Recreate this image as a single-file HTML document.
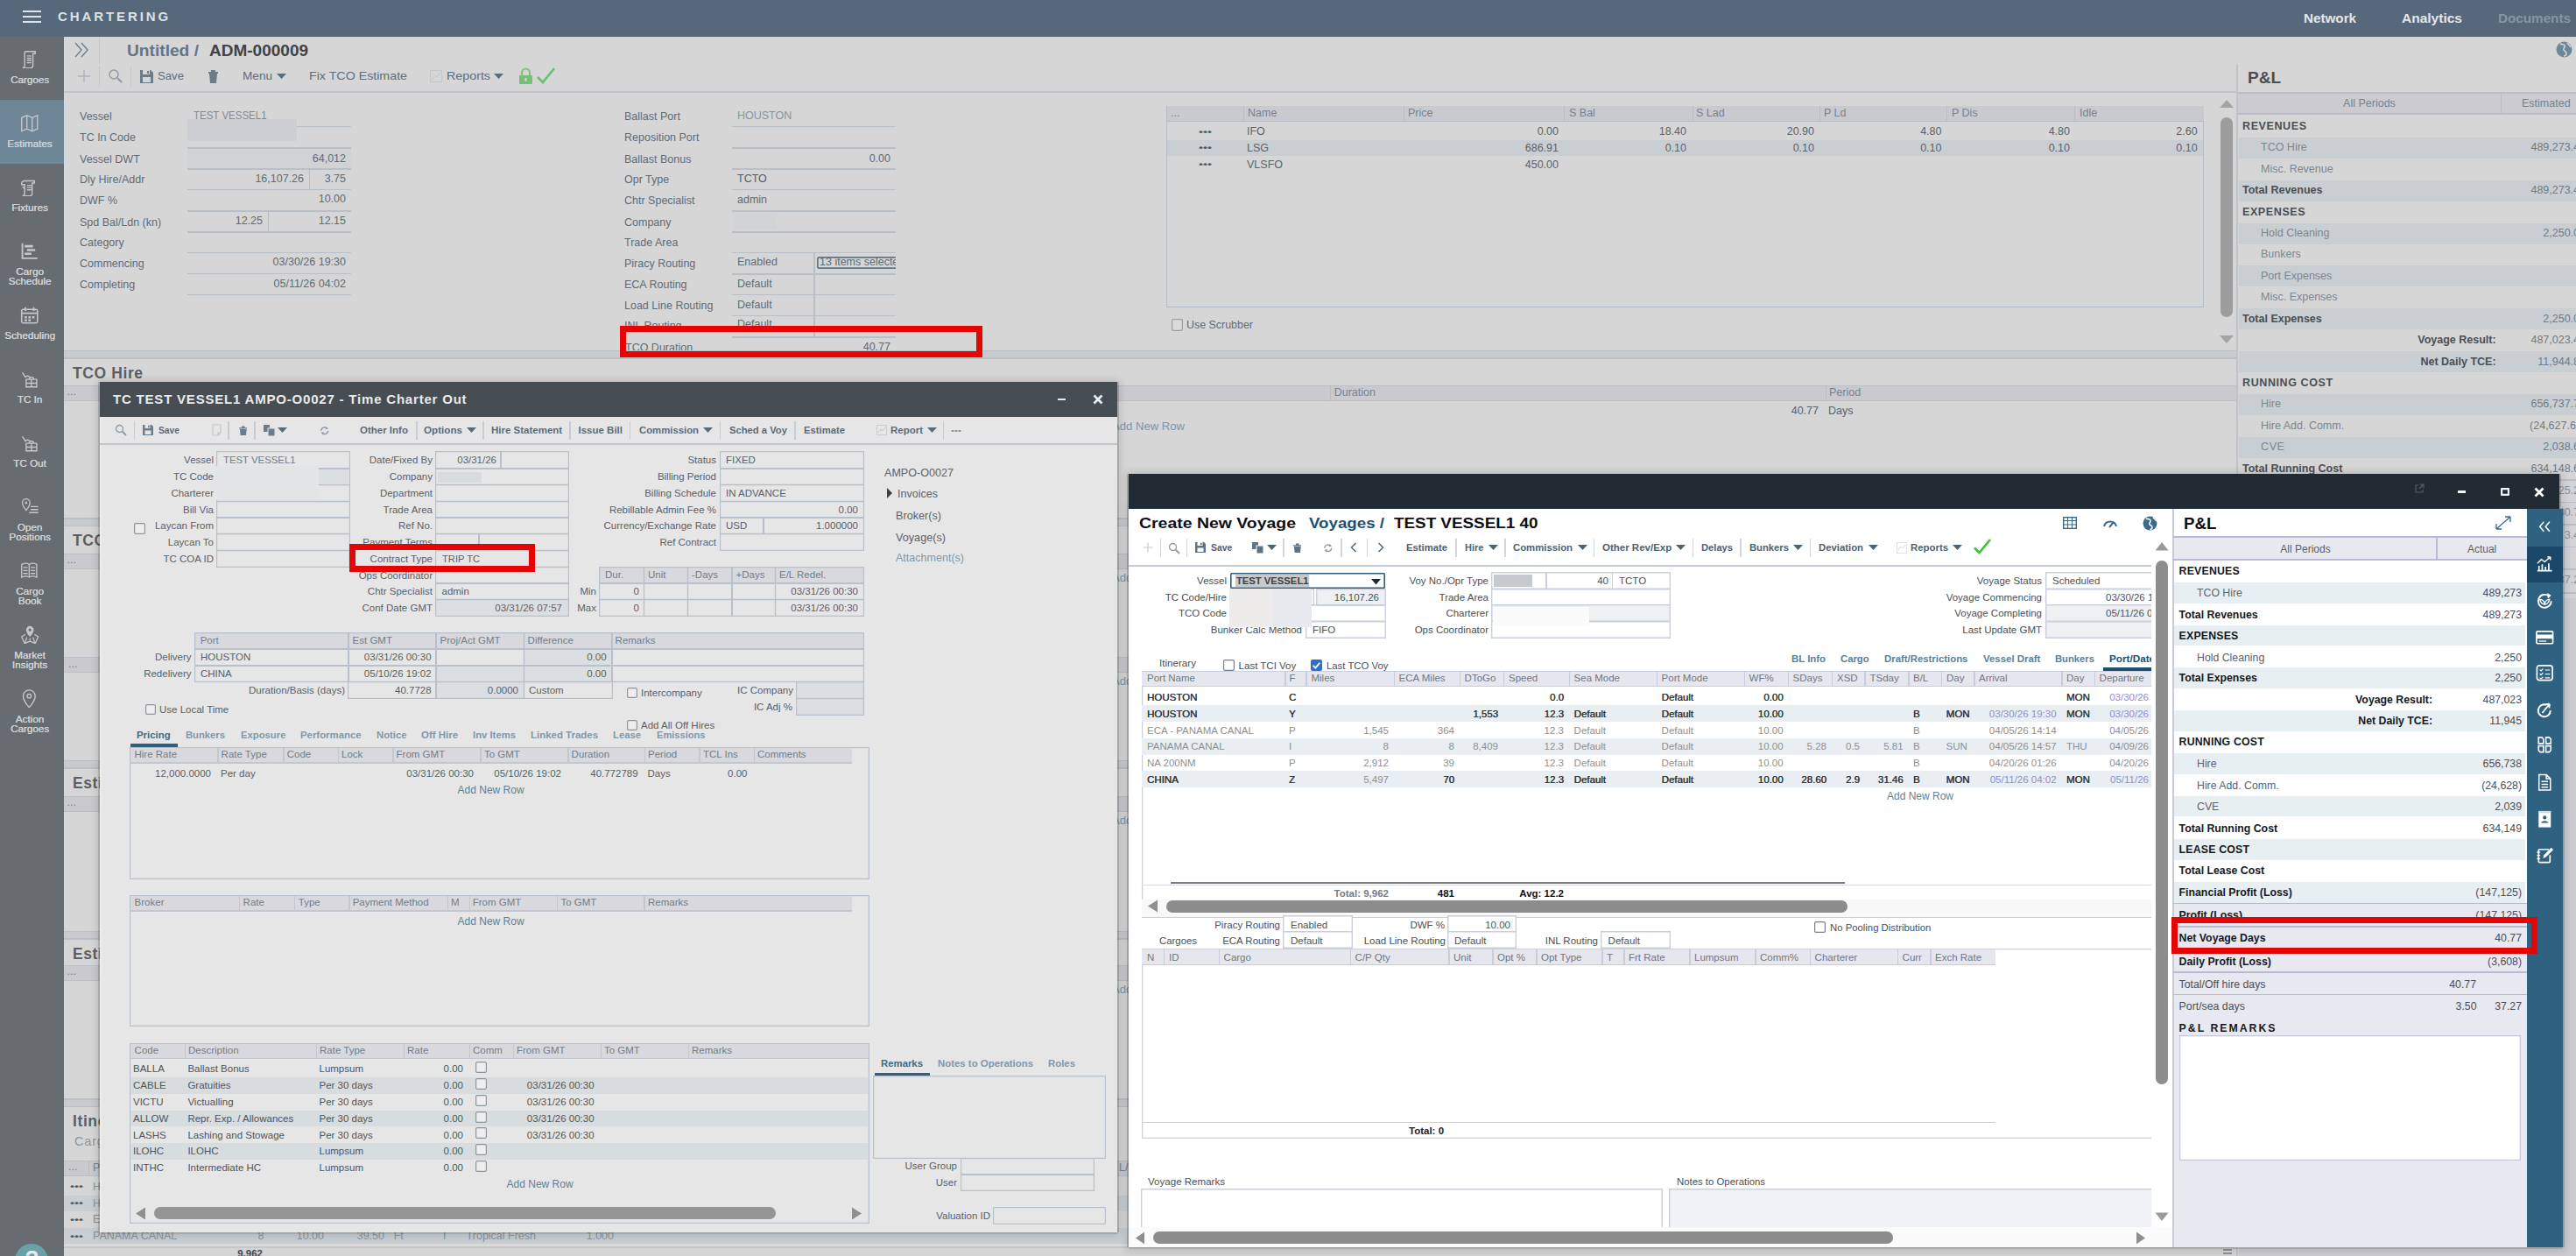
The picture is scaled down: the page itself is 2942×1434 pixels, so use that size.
<!DOCTYPE html><html><head><meta charset="utf-8"><title>Chartering</title><style>
html,body{margin:0;padding:0;background:#d6d6d6;overflow:hidden}
#root{position:relative;width:2942px;height:1434px;overflow:hidden;font-family:"Liberation Sans",sans-serif;background:#d6d6d6}
.a{position:absolute}
.t{position:absolute;white-space:nowrap;line-height:1}
</style></head><body><div id="root">
<div class="a" style="left:0px;top:0px;width:2942px;height:1434px;background:#d6d6d6;"></div>
<svg class="a" style="left:84px;top:47px;" width="18" height="20" viewBox="0 0 18 20"><path d="M2 2 L9 10 L2 18 M9 2 L16 10 L9 18" fill="none" stroke="#6d8394" stroke-width="1.5"/></svg>
<div class="a" style="left:112.5px;top:43px;width:1px;height:30px;background:#c3c7cc;"></div>
<div class="t" style="top:50px;font-size:17.5px;color:#5f7686;font-weight:bold;left:145px;transform:scaleX(1.095);transform-origin:0 0;">Untitled /</div>
<div class="t" style="top:50px;font-size:17.5px;color:#3f4348;font-weight:bold;left:239px;transform:scaleX(1.086);transform-origin:0 0;">ADM-000009</div>
<svg class="a" style="left:88px;top:79px;" width="16" height="16" viewBox="0 0 16 16"><path d="M8 1v14M1 8h14" stroke="#a9b2ba" stroke-width="1.3" fill="none"/></svg>
<div class="a" style="left:112.5px;top:76px;width:1px;height:23px;background:#c3c7cc;"></div>
<svg class="a" style="left:123px;top:78px;" width="18" height="18" viewBox="0 0 18 18"><circle cx="7" cy="7" r="5" fill="none" stroke="#8d9aa6" stroke-width="1.5"/><path d="M11 11l5 5" stroke="#8d9aa6" stroke-width="2"/></svg>
<div class="a" style="left:148.5px;top:76px;width:1px;height:23px;background:#c3c7cc;"></div>
<svg class="a" style="left:160px;top:80px;" width="15" height="15" viewBox="0 0 15 15"><path d="M0 0h12l3 3v12h-15z" fill="#6b7d8b"/><rect x="3" y="0" width="8" height="5" fill="#d6d6d6"/><rect x="8" y="1" width="2" height="3" fill="#6b7d8b"/><rect x="3" y="8" width="9" height="6" fill="#d6d6d6"/></svg>
<div class="t" style="top:80.3px;font-size:13.5px;color:#5c6d7a;left:180px;transform:scaleX(0.975);transform-origin:0 0;">Save</div>
<svg class="a" style="left:237px;top:79px;" width="13" height="16" viewBox="0 0 13 16"><path d="M1 3h11v2h-11zM4 1h5v2h-5zM2 5h9l-1 11h-7z" fill="#6b7d8b"/></svg>
<div class="t" style="top:80.3px;font-size:13.5px;color:#5c6d7a;left:277px;transform:scaleX(1.007);transform-origin:0 0;">Menu</div>
<svg class="a" style="left:316px;top:84px;" width="11" height="7" viewBox="0 0 11 7"><path d="M0 0h11l-5.5 6z" fill="#5c6d7a"/></svg>
<div class="t" style="top:80.3px;font-size:13.5px;color:#5c6d7a;left:353px;transform:scaleX(1.054);transform-origin:0 0;">Fix TCO Estimate</div>
<div class="a" style="left:491px;top:80px;width:14px;height:14px;box-shadow:inset 0 0 0 1px #c3c8cd;"></div>
<svg class="a" style="left:492px;top:81px;" width="12" height="12" viewBox="0 0 12 12"><path d="M1 10l4-5 2 2 4-5" stroke="#c0c6cb" fill="none"/></svg>
<div class="t" style="top:80.3px;font-size:13.5px;color:#5c6d7a;left:510px;transform:scaleX(1.058);transform-origin:0 0;">Reports</div>
<svg class="a" style="left:564px;top:84px;" width="11" height="7" viewBox="0 0 11 7"><path d="M0 0h11l-5.5 6z" fill="#5c6d7a"/></svg>
<svg class="a" style="left:592px;top:77px;" width="17" height="20" viewBox="0 0 17 20"><path d="M4 9V6a4.5 4.5 0 0 1 9 0v3" fill="none" stroke="#7fc27f" stroke-width="2"/><rect x="1" y="9" width="15" height="10" rx="1" fill="#74c074"/><rect x="7.5" y="12" width="2" height="4" fill="#d6d6d6"/></svg>
<svg class="a" style="left:613px;top:77px;" width="21" height="19" viewBox="0 0 21 19"><path d="M1 11l6 6L20 1" fill="none" stroke="#66c266" stroke-width="2.6"/></svg>
<div class="a" style="left:73px;top:104.2px;width:2482px;height:1.5px;background:#bcc3ca;"></div>
<svg class="a" style="left:2919px;top:47px;" width="19" height="19" viewBox="0 0 19 19"><circle cx="9.5" cy="9.5" r="9" fill="#6c8799"/><path d="M5 3c2 1 4 0 5 2s-2 3-1 5 3 1 3 4-3 3-3 3M13 2c1 2 3 2 4 5" stroke="#d6d6d6" stroke-width="1.6" fill="none"/></svg>
<div class="a" style="left:214px;top:169px;width:187px;height:24px;background:#d0d2d3;"></div>
<div class="t" style="top:127.4px;font-size:12.5px;color:#5e6b77;left:91px;">Vessel</div>
<div class="t" style="top:150.9px;font-size:12.5px;color:#5e6b77;left:91px;">TC In Code</div>
<div class="t" style="top:175.9px;font-size:12.5px;color:#5e6b77;left:91px;">Vessel DWT</div>
<div class="t" style="top:199.1px;font-size:12.5px;color:#5e6b77;left:91px;">Dly Hire/Addr</div>
<div class="t" style="top:222.7px;font-size:12.5px;color:#5e6b77;left:91px;">DWF %</div>
<div class="t" style="top:247.6px;font-size:12.5px;color:#5e6b77;left:91px;">Spd Bal/Ldn (kn)</div>
<div class="t" style="top:271.4px;font-size:12.5px;color:#5e6b77;left:91px;">Category</div>
<div class="t" style="top:294.9px;font-size:12.5px;color:#5e6b77;left:91px;">Commencing</div>
<div class="t" style="top:319.2px;font-size:12.5px;color:#5e6b77;left:91px;">Completing</div>
<div class="a" style="left:214px;top:143.8px;width:187px;height:1.3px;background:#b8bfc7;"></div>
<div class="a" style="left:214px;top:168.3px;width:187px;height:1.3px;background:#b8bfc7;"></div>
<div class="a" style="left:214px;top:192.3px;width:187px;height:1.3px;background:#b8bfc7;"></div>
<div class="a" style="left:214px;top:215.8px;width:187px;height:1.3px;background:#b8bfc7;"></div>
<div class="a" style="left:214px;top:240.3px;width:187px;height:1.3px;background:#b8bfc7;"></div>
<div class="a" style="left:214px;top:264.4px;width:187px;height:1.3px;background:#b8bfc7;"></div>
<div class="a" style="left:214px;top:287.9px;width:187px;height:1.3px;background:#b8bfc7;"></div>
<div class="a" style="left:214px;top:311.7px;width:187px;height:1.3px;background:#b8bfc7;"></div>
<div class="a" style="left:214px;top:335.9px;width:187px;height:1.3px;background:#b8bfc7;"></div>
<div class="a" style="left:214px;top:136px;width:125px;height:25px;background:#cdcfd2;"></div>
<div class="t" style="top:125.9px;font-size:12.5px;color:#7c8a96;left:220.5px;transform:scaleX(0.920);transform-origin:0 0;">TEST VESSEL1</div>
<div class="t" style="top:174.6px;font-size:12.5px;color:#606a74;right:2547px;">64,012</div>
<div class="t" style="top:197.9px;font-size:12.5px;color:#606a74;right:2595px;">16,107.26</div>
<div class="a" style="left:352.9px;top:193px;width:1.3px;height:23.5px;background:#b8bfc7;"></div>
<div class="t" style="top:197.9px;font-size:12.5px;color:#606a74;right:2547px;">3.75</div>
<div class="t" style="top:221.4px;font-size:12.5px;color:#606a74;right:2547px;">10.00</div>
<div class="t" style="top:245.9px;font-size:12.5px;color:#606a74;right:2642px;">12.25</div>
<div class="a" style="left:305.9px;top:241px;width:1.3px;height:24px;background:#b8bfc7;"></div>
<div class="t" style="top:245.9px;font-size:12.5px;color:#606a74;right:2547px;">12.15</div>
<div class="t" style="top:293.4px;font-size:12.5px;color:#606a74;right:2547px;">03/30/26 19:30</div>
<div class="t" style="top:317.9px;font-size:12.5px;color:#606a74;right:2547px;">05/11/26 04:02</div>
<div class="t" style="top:127.4px;font-size:12.5px;color:#5e6b77;left:713px;">Ballast Port</div>
<div class="t" style="top:150.9px;font-size:12.5px;color:#5e6b77;left:713px;">Reposition Port</div>
<div class="t" style="top:176px;font-size:12.5px;color:#5e6b77;left:713px;">Ballast Bonus</div>
<div class="t" style="top:199.4px;font-size:12.5px;color:#5e6b77;left:713px;">Opr Type</div>
<div class="t" style="top:222.8px;font-size:12.5px;color:#5e6b77;left:713px;">Chtr Specialist</div>
<div class="t" style="top:247.9px;font-size:12.5px;color:#5e6b77;left:713px;">Company</div>
<div class="t" style="top:271.4px;font-size:12.5px;color:#5e6b77;left:713px;">Trade Area</div>
<div class="t" style="top:294.7px;font-size:12.5px;color:#5e6b77;left:713px;">Piracy Routing</div>
<div class="t" style="top:319.4px;font-size:12.5px;color:#5e6b77;left:713px;">ECA Routing</div>
<div class="t" style="top:342.9px;font-size:12.5px;color:#5e6b77;left:713px;">Load Line Routing</div>
<div class="t" style="top:365.9px;font-size:12.5px;color:#5e6b77;left:713px;">INL Routing</div>
<div class="a" style="left:836px;top:143.8px;width:187px;height:1.3px;background:#b8bfc7;"></div>
<div class="a" style="left:836px;top:168.3px;width:187px;height:1.3px;background:#b8bfc7;"></div>
<div class="a" style="left:836px;top:192.3px;width:187px;height:1.3px;background:#b8bfc7;"></div>
<div class="a" style="left:836px;top:215.8px;width:187px;height:1.3px;background:#b8bfc7;"></div>
<div class="a" style="left:836px;top:240.3px;width:187px;height:1.3px;background:#b8bfc7;"></div>
<div class="a" style="left:836px;top:264.4px;width:187px;height:1.3px;background:#b8bfc7;"></div>
<div class="a" style="left:836px;top:287.7px;width:187px;height:1.3px;background:#b8bfc7;"></div>
<div class="a" style="left:836px;top:312.4px;width:187px;height:1.3px;background:#b8bfc7;"></div>
<div class="a" style="left:836px;top:335.9px;width:187px;height:1.3px;background:#b8bfc7;"></div>
<div class="a" style="left:836px;top:359.7px;width:187px;height:1.3px;background:#b8bfc7;"></div>
<div class="a" style="left:836px;top:384.4px;width:187px;height:1.3px;background:#b8bfc7;"></div>
<div class="a" style="left:929.4px;top:288.3px;width:1.3px;height:96.7px;background:#b8bfc7;"></div>
<div class="a" style="left:837px;top:243px;width:50px;height:19px;background:#d1d3d4;"></div>
<div class="t" style="top:126.1px;font-size:12.5px;color:#8694a0;left:842px;">HOUSTON</div>
<div class="t" style="top:174.7px;font-size:12.5px;color:#606a74;right:1925px;">0.00</div>
<div class="t" style="top:197.7px;font-size:12.5px;color:#515b66;left:842px;">TCTO</div>
<div class="t" style="top:221.6px;font-size:12.5px;color:#606a74;left:842px;">admin</div>
<div class="t" style="top:292.9px;font-size:12.5px;color:#606a74;left:842px;">Enabled</div>
<div class="t" style="top:317.9px;font-size:12.5px;color:#606a74;left:842px;">Default</div>
<div class="t" style="top:341.6px;font-size:12.5px;color:#606a74;left:842px;">Default</div>
<div class="t" style="top:363.9px;font-size:12.5px;color:#606a74;left:842px;">Default</div>
<div class="a" style="left:930px;top:290px;width:93px;height:21px;overflow:hidden;">
<div class="a" style="left:3px;top:2.6px;width:107px;height:14.8px;box-shadow:inset 0 0 0 1.7px #5c7589;border-radius:2.5px;"></div>
<div class="t" style="top:3.2px;font-size:12.5px;color:#606a74;left:6px;">13 items selected</div>
</div>
<div class="t" style="top:391.4px;font-size:12.5px;color:#5e6b77;left:714px;">TCO Duration</div>
<div class="t" style="top:389.9px;font-size:12.5px;color:#606a74;right:1925px;">40.77</div>
<div class="a" style="left:1332px;top:120.5px;width:1185px;height:230.5px;box-shadow:inset 0 0 0 1px #b4bcc6;"></div>
<div class="a" style="left:1332.5px;top:121px;width:1184px;height:17px;background:#c9c9ce;"></div>
<div class="a" style="left:1332px;top:137.5px;width:1185px;height:1px;background:#b4bcc6;"></div>
<div class="a" style="left:1420.2px;top:121px;width:1px;height:17px;background:#b9bdc6;"></div>
<div class="a" style="left:1603.2px;top:121px;width:1px;height:17px;background:#b9bdc6;"></div>
<div class="a" style="left:1786.1px;top:121px;width:1px;height:17px;background:#b9bdc6;"></div>
<div class="a" style="left:1932.5px;top:121px;width:1px;height:17px;background:#b9bdc6;"></div>
<div class="a" style="left:2077.5px;top:121px;width:1px;height:17px;background:#b9bdc6;"></div>
<div class="a" style="left:2223.1px;top:121px;width:1px;height:17px;background:#b9bdc6;"></div>
<div class="a" style="left:2369.1px;top:121px;width:1px;height:17px;background:#b9bdc6;"></div>
<div class="t" style="top:122.7px;font-size:12.5px;color:#76828e;left:1337px;">...</div>
<div class="t" style="top:122.7px;font-size:12.5px;color:#76828e;left:1425px;">Name</div>
<div class="t" style="top:122.7px;font-size:12.5px;color:#76828e;left:1608px;">Price</div>
<div class="t" style="top:122.7px;font-size:12.5px;color:#76828e;left:1792px;">S Bal</div>
<div class="t" style="top:122.7px;font-size:12.5px;color:#76828e;left:1937px;">S Lad</div>
<div class="t" style="top:122.7px;font-size:12.5px;color:#76828e;left:2083px;">P Ld</div>
<div class="t" style="top:122.7px;font-size:12.5px;color:#76828e;left:2229px;">P Dis</div>
<div class="t" style="top:122.7px;font-size:12.5px;color:#76828e;left:2375px;">Idle</div>
<div class="a" style="left:1333px;top:159.5px;width:1183px;height:18.2px;background:#c9ced2;"></div>
<div class="t" style="top:146.5px;font-size:9px;color:#4e565e;font-weight:bold;left:1369px;transform:scaleX(1.587);transform-origin:0 0;">•••</div>
<div class="t" style="top:144.2px;font-size:12.5px;color:#59626b;left:1424px;">IFO</div>
<div class="t" style="top:144.2px;font-size:12.5px;color:#59626b;right:1162px;">0.00</div>
<div class="t" style="top:144.2px;font-size:12.5px;color:#59626b;right:1016px;">18.40</div>
<div class="t" style="top:144.2px;font-size:12.5px;color:#59626b;right:870px;">20.90</div>
<div class="t" style="top:144.2px;font-size:12.5px;color:#59626b;right:724.5px;">4.80</div>
<div class="t" style="top:144.2px;font-size:12.5px;color:#59626b;right:578px;">4.80</div>
<div class="t" style="top:144.2px;font-size:12.5px;color:#59626b;right:432.4px;">2.60</div>
<div class="t" style="top:164.9px;font-size:9px;color:#4e565e;font-weight:bold;left:1369px;transform:scaleX(1.587);transform-origin:0 0;">•••</div>
<div class="t" style="top:162.6px;font-size:12.5px;color:#59626b;left:1424px;">LSG</div>
<div class="t" style="top:162.6px;font-size:12.5px;color:#59626b;right:1162px;">686.91</div>
<div class="t" style="top:162.6px;font-size:12.5px;color:#59626b;right:1016px;">0.10</div>
<div class="t" style="top:162.6px;font-size:12.5px;color:#59626b;right:870px;">0.10</div>
<div class="t" style="top:162.6px;font-size:12.5px;color:#59626b;right:724.5px;">0.10</div>
<div class="t" style="top:162.6px;font-size:12.5px;color:#59626b;right:578px;">0.10</div>
<div class="t" style="top:162.6px;font-size:12.5px;color:#59626b;right:432.4px;">0.10</div>
<div class="t" style="top:183.9px;font-size:9px;color:#4e565e;font-weight:bold;left:1369px;transform:scaleX(1.587);transform-origin:0 0;">•••</div>
<div class="t" style="top:181.6px;font-size:12.5px;color:#59626b;left:1424px;">VLSFO</div>
<div class="t" style="top:181.6px;font-size:12.5px;color:#59626b;right:1162px;">450.00</div>
<svg class="a" style="left:2534px;top:112px;" width="18" height="12" viewBox="0 0 18 12"><path d="M1 11L9 2l8 9z" fill="#a4a4a4"/></svg>
<div class="a" style="left:2536px;top:134px;width:13.5px;height:228px;background:#9c9c9c;border-radius:7px;"></div>
<svg class="a" style="left:2534px;top:382px;" width="18" height="12" viewBox="0 0 18 12"><path d="M1 1h16L9 10z" fill="#a4a4a4"/></svg>
<div class="a" style="left:1337.5px;top:364px;width:13.5px;height:14px;background:#dadada;box-shadow:inset 0 0 0 1.2px #9aa0a6;border-radius:2px;"></div>
<div class="t" style="top:364.9px;font-size:12.5px;color:#5e6b77;left:1355px;transform:scaleX(0.994);transform-origin:0 0;">Use Scrubber</div>
<div class="a" style="left:73px;top:400.5px;width:2482px;height:8.5px;background:#c9cace;"></div>
<div class="a" style="left:73px;top:399.8px;width:2482px;height:1.4px;background:#bac0c6;"></div>
<div class="a" style="left:73px;top:408.3px;width:2482px;height:1.4px;background:#bac0c6;"></div>
<div class="t" style="top:417.7px;font-size:17.5px;color:#5b5f63;font-weight:bold;letter-spacing:0.6px;left:83px;">TCO Hire</div>
<div class="a" style="left:73px;top:440px;width:2482px;height:17px;background:#c9c9ce;"></div>
<div class="a" style="left:73px;top:439.5px;width:2482px;height:1px;background:#bbbfc7;"></div>
<div class="a" style="left:73px;top:456.5px;width:2482px;height:1px;background:#bbbfc7;"></div>
<div class="t" style="top:441.4px;font-size:12.5px;color:#76828e;left:76.5px;">...</div>
<div class="a" style="left:1518.5px;top:440px;width:1px;height:17px;background:#b9bdc6;"></div>
<div class="t" style="top:441.9px;font-size:12.5px;color:#76828e;left:1523.7px;">Duration</div>
<div class="a" style="left:2084.5px;top:440px;width:1px;height:17px;background:#b9bdc6;"></div>
<div class="t" style="top:441.9px;font-size:12.5px;color:#76828e;left:2089px;">Period</div>
<div class="t" style="top:462.9px;font-size:12.5px;color:#59626b;right:865px;">40.77</div>
<div class="t" style="top:462.9px;font-size:12.5px;color:#59626b;left:2088px;">Days</div>
<div class="t" style="top:480.9px;font-size:12.5px;color:#7b95a7;left:1270px;transform:scaleX(1.048);transform-origin:0 0;">Add New Row</div>
<div class="a" style="left:73px;top:592px;width:2482px;height:8.5px;background:#c9cace;"></div>
<div class="a" style="left:73px;top:591.3px;width:2482px;height:1.4px;background:#bac0c6;"></div>
<div class="a" style="left:73px;top:599.8px;width:2482px;height:1.4px;background:#bac0c6;"></div>
<div class="t" style="top:609.2px;font-size:17.5px;color:#5b5f63;font-weight:bold;letter-spacing:0.6px;left:83px;">TCO Expenses</div>
<div class="a" style="left:73px;top:632px;width:2482px;height:17px;background:#c9c9ce;"></div>
<div class="a" style="left:73px;top:631.5px;width:2482px;height:1px;background:#bbbfc7;"></div>
<div class="a" style="left:73px;top:648.5px;width:2482px;height:1px;background:#bbbfc7;"></div>
<div class="t" style="top:633.4px;font-size:12.5px;color:#76828e;left:76.5px;">...</div>
<div class="a" style="left:73px;top:750.5px;width:2482px;height:17px;background:#c9c9ce;"></div>
<div class="a" style="left:73px;top:750px;width:2482px;height:1px;background:#bbbfc7;"></div>
<div class="a" style="left:73px;top:767px;width:2482px;height:1px;background:#bbbfc7;"></div>
<div class="t" style="top:751.9px;font-size:12.5px;color:#76828e;left:78px;">...</div>
<div class="a" style="left:73px;top:868.5px;width:2482px;height:8.5px;background:#c9cace;"></div>
<div class="a" style="left:73px;top:867.8px;width:2482px;height:1.4px;background:#bac0c6;"></div>
<div class="a" style="left:73px;top:876.3px;width:2482px;height:1.4px;background:#bac0c6;"></div>
<div class="t" style="top:885.7px;font-size:17.5px;color:#5b5f63;font-weight:bold;letter-spacing:0.6px;left:83px;">Estimate Revenues</div>
<div class="a" style="left:73px;top:909px;width:2482px;height:17px;background:#c9c9ce;"></div>
<div class="a" style="left:73px;top:908.5px;width:2482px;height:1px;background:#bbbfc7;"></div>
<div class="a" style="left:73px;top:925.5px;width:2482px;height:1px;background:#bbbfc7;"></div>
<div class="t" style="top:910.4px;font-size:12.5px;color:#76828e;left:76.5px;">...</div>
<div class="a" style="left:73px;top:1063.5px;width:2482px;height:8.5px;background:#c9cace;"></div>
<div class="a" style="left:73px;top:1062.8px;width:2482px;height:1.4px;background:#bac0c6;"></div>
<div class="a" style="left:73px;top:1071.3px;width:2482px;height:1.4px;background:#bac0c6;"></div>
<div class="t" style="top:1080.7px;font-size:17.5px;color:#5b5f63;font-weight:bold;letter-spacing:0.6px;left:83px;">Estimate Expenses</div>
<div class="a" style="left:73px;top:1102px;width:2482px;height:17px;background:#c9c9ce;"></div>
<div class="a" style="left:73px;top:1101.5px;width:2482px;height:1px;background:#bbbfc7;"></div>
<div class="a" style="left:73px;top:1118.5px;width:2482px;height:1px;background:#bbbfc7;"></div>
<div class="t" style="top:1103.4px;font-size:12.5px;color:#76828e;left:76.5px;">...</div>
<div class="t" style="top:653.9px;font-size:12.5px;color:#7b95a7;left:1270px;transform:scaleX(1.048);transform-origin:0 0;">Add New Row</div>
<div class="t" style="top:772.4px;font-size:12.5px;color:#7b95a7;left:1270px;transform:scaleX(1.048);transform-origin:0 0;">Add New Row</div>
<div class="t" style="top:930.9px;font-size:12.5px;color:#7b95a7;left:1270px;transform:scaleX(1.048);transform-origin:0 0;">Add New Row</div>
<div class="t" style="top:1123.9px;font-size:12.5px;color:#7b95a7;left:1270px;transform:scaleX(1.048);transform-origin:0 0;">Add New Row</div>
<div class="a" style="left:73px;top:1255px;width:2482px;height:8.5px;background:#c9cace;"></div>
<div class="a" style="left:73px;top:1254.3px;width:2482px;height:1.4px;background:#bac0c6;"></div>
<div class="a" style="left:73px;top:1262.8px;width:2482px;height:1.4px;background:#bac0c6;"></div>
<div class="t" style="top:1272.2px;font-size:17.5px;color:#5b5f63;font-weight:bold;letter-spacing:0.6px;left:83px;">Itinerary</div>
<div class="t" style="top:1295.8px;font-size:14.5px;color:#8d969e;letter-spacing:0.8px;left:85px;">Cargoes</div>
<div class="a" style="left:73px;top:1325px;width:2482px;height:17.5px;background:#c9c9ce;"></div>
<div class="a" style="left:73px;top:1324.5px;width:2482px;height:1px;background:#bbbfc7;"></div>
<div class="a" style="left:73px;top:1342px;width:2482px;height:1px;background:#bbbfc7;"></div>
<div class="t" style="top:1326.4px;font-size:12.5px;color:#76828e;left:78px;">...</div>
<div class="a" style="left:100.5px;top:1325px;width:1px;height:17.5px;background:#b9bdc6;"></div>
<div class="t" style="top:1327.4px;font-size:12.5px;color:#76828e;left:106px;">Port</div>
<div class="a" style="left:1273.5px;top:1325px;width:1px;height:17.5px;background:#b9bdc6;"></div>
<div class="t" style="top:1327.4px;font-size:12.5px;color:#76828e;left:1278px;">L/D</div>
<div class="t" style="top:1351.3px;font-size:9px;color:#4e565e;font-weight:bold;left:80px;transform:scaleX(1.587);transform-origin:0 0;">•••</div>
<div class="a" style="left:73px;top:1364.9px;width:2482px;height:18.6px;background:#c9ced2;"></div>
<div class="t" style="top:1369.9px;font-size:9px;color:#4e565e;font-weight:bold;left:80px;transform:scaleX(1.587);transform-origin:0 0;">•••</div>
<div class="t" style="top:1388.7px;font-size:9px;color:#4e565e;font-weight:bold;left:80px;transform:scaleX(1.587);transform-origin:0 0;">•••</div>
<div class="a" style="left:73px;top:1401.6px;width:2482px;height:18.2px;background:#c9ced2;"></div>
<div class="t" style="top:1407.5px;font-size:9px;color:#4e565e;font-weight:bold;left:80px;transform:scaleX(1.587);transform-origin:0 0;">•••</div>
<div class="t" style="top:1349px;font-size:12.5px;color:#8b949c;left:106px;">HOUSTON</div>
<div class="t" style="top:1367.6px;font-size:12.5px;color:#8b949c;left:106px;">HOUSTON</div>
<div class="t" style="top:1386.4px;font-size:12.5px;color:#8b949c;left:106px;">ECA - PANAMA CANAL</div>
<div class="t" style="top:1405.2px;font-size:12.5px;color:#8b949c;left:106px;">PANAMA CANAL</div>
<div class="t" style="top:1405.2px;font-size:12.5px;color:#8b949c;right:2640.5px;">8</div>
<div class="t" style="top:1405.2px;font-size:12.5px;color:#8b949c;right:2572px;">10.00</div>
<div class="t" style="top:1405.2px;font-size:12.5px;color:#8b949c;right:2503px;">39.50</div>
<div class="t" style="top:1405.2px;font-size:12.5px;color:#8b949c;right:2241px;">1.000</div>
<div class="t" style="top:1405.2px;font-size:12.5px;color:#8b949c;left:449.7px;">Ft</div>
<div class="t" style="top:1405.2px;font-size:12.5px;color:#8b949c;left:506px;">I</div>
<div class="t" style="top:1405.2px;font-size:12.5px;color:#8b949c;left:532.6px;">Tropical Fresh</div>
<div class="a" style="left:73px;top:1419.8px;width:2482px;height:2.8px;background:#dadada;"></div>
<div class="a" style="left:73px;top:1422.6px;width:2482px;height:11.4px;background:#d4d4d5;"></div>
<div class="a" style="left:73px;top:1422.6px;width:2482px;height:2px;background:#c3c7ca;"></div>
<div class="a" style="left:2539px;top:1426px;width:10px;height:2px;background:#8f9399;"></div>
<div class="a" style="left:2539px;top:1430px;width:10px;height:2px;background:#8f9399;"></div>
<div class="t" style="top:1426.2px;font-size:11.5px;color:#44494e;font-weight:bold;right:2642px;">9,962</div>
<div class="a" style="left:2554.2px;top:73px;width:1.5px;height:1361px;background:#c0c4ca;"></div>
<div class="a" style="left:2556px;top:106px;width:386px;height:24px;background:#cbcbd0;"></div>
<div class="a" style="left:2556px;top:105.2px;width:386px;height:1.5px;background:#bcbcc8;"></div>
<div class="a" style="left:2556px;top:129.2px;width:386px;height:1.5px;background:#bcbcc8;"></div>
<div class="t" style="top:79.4px;font-size:19px;color:#4b4f53;font-weight:bold;left:2567px;">P&amp;L</div>
<div class="t" style="top:111.9px;font-size:12.5px;color:#76828e;left:2676.1px;">All Periods</div>
<div class="a" style="left:2855.8px;top:106px;width:1.5px;height:24px;background:#bcbcc8;"></div>
<div class="t" style="top:111.9px;font-size:12.5px;color:#76828e;left:2880px;">Estimated</div>
<div class="a" style="left:2556.5px;top:546px;width:385.5px;height:137px;background:#d3d3d8;"></div>
<div class="a" style="left:2556.5px;top:683px;width:385.5px;height:751px;background:#cbcbd0;"></div>
<div class="a" style="left:2556.5px;top:547.4px;width:385.5px;height:1.3px;background:#bcbccb;"></div>
<div class="a" style="left:2556.5px;top:573px;width:385.5px;height:1.3px;background:#bcbccb;"></div>
<div class="a" style="left:2556.5px;top:598.4px;width:385.5px;height:1.3px;background:#bcbccb;"></div>
<div class="a" style="left:2556.5px;top:623.9px;width:385.5px;height:1.3px;background:#bcbccb;"></div>
<div class="a" style="left:2556.5px;top:649.4px;width:385.5px;height:1.3px;background:#bcbccb;"></div>
<div class="a" style="left:2556.5px;top:676.4px;width:385.5px;height:1.3px;background:#bcbccb;"></div>
<div class="t" style="top:554.4px;font-size:12.5px;color:#8c929a;right:-11px;">25.24</div>
<div class="t" style="top:579.4px;font-size:12.5px;color:#8c929a;right:-11px;">40.77</div>
<div class="t" style="top:604.9px;font-size:12.5px;color:#8c929a;right:-11px;">3.49</div>
<div class="t" style="top:656.1px;font-size:12.5px;color:#8c929a;right:-11px;">37.28</div>
<div class="t" style="top:137.9px;font-size:12.5px;color:#4a4f54;font-weight:bold;letter-spacing:0.6px;left:2561px;">REVENUES</div>
<div class="a" style="left:2556.5px;top:156.9px;width:385.5px;height:24px;background:#c9ced2;"></div>
<div class="t" style="top:162.3px;font-size:12.5px;color:#7b8791;left:2582px;">TCO Hire</div>
<div class="t" style="top:162.3px;font-size:12.5px;color:#6f7a84;right:-11px;">489,273.45</div>
<div class="t" style="top:186.7px;font-size:12.5px;color:#7b8791;left:2582px;">Misc. Revenue</div>
<div class="a" style="left:2556.5px;top:205.8px;width:385.5px;height:24px;background:#c9ced2;"></div>
<div class="t" style="top:211.1px;font-size:12.5px;color:#4a4f54;font-weight:bold;left:2561px;">Total Revenues</div>
<div class="t" style="top:211.1px;font-size:12.5px;color:#6f7a84;right:-11px;">489,273.45</div>
<div class="t" style="top:235.6px;font-size:12.5px;color:#4a4f54;font-weight:bold;letter-spacing:0.6px;left:2561px;">EXPENSES</div>
<div class="a" style="left:2556.5px;top:254.6px;width:385.5px;height:24px;background:#c9ced2;"></div>
<div class="t" style="top:260px;font-size:12.5px;color:#7b8791;left:2582px;">Hold Cleaning</div>
<div class="t" style="top:260px;font-size:12.5px;color:#6f7a84;right:-11px;">2,250.00</div>
<div class="t" style="top:284.4px;font-size:12.5px;color:#7b8791;left:2582px;">Bunkers</div>
<div class="a" style="left:2556.5px;top:303.4px;width:385.5px;height:24px;background:#c9ced2;"></div>
<div class="t" style="top:308.8px;font-size:12.5px;color:#7b8791;left:2582px;">Port Expenses</div>
<div class="t" style="top:333.2px;font-size:12.5px;color:#7b8791;left:2582px;">Misc. Expenses</div>
<div class="a" style="left:2556.5px;top:352.3px;width:385.5px;height:24px;background:#c9ced2;"></div>
<div class="t" style="top:357.7px;font-size:12.5px;color:#4a4f54;font-weight:bold;left:2561px;">Total Expenses</div>
<div class="t" style="top:357.7px;font-size:12.5px;color:#6f7a84;right:-11px;">2,250.00</div>
<div class="t" style="top:382.1px;font-size:12.5px;color:#4a4f54;font-weight:bold;right:91.4px;">Voyage Result:</div>
<div class="t" style="top:382.1px;font-size:12.5px;color:#6f7a84;right:-11px;">487,023.45</div>
<div class="a" style="left:2556.5px;top:401.1px;width:385.5px;height:24px;background:#c9ced2;"></div>
<div class="t" style="top:406.5px;font-size:12.5px;color:#4a4f54;font-weight:bold;right:91.4px;">Net Daily TCE:</div>
<div class="t" style="top:406.5px;font-size:12.5px;color:#6f7a84;right:-11px;">11,944.85</div>
<div class="t" style="top:430.9px;font-size:12.5px;color:#4a4f54;font-weight:bold;letter-spacing:0.6px;left:2561px;">RUNNING COST</div>
<div class="a" style="left:2556.5px;top:450px;width:385.5px;height:24px;background:#c9ced2;"></div>
<div class="t" style="top:455.3px;font-size:12.5px;color:#7b8791;left:2582px;">Hire</div>
<div class="t" style="top:455.3px;font-size:12.5px;color:#6f7a84;right:-11px;">656,737.72</div>
<div class="t" style="top:479.8px;font-size:12.5px;color:#7b8791;left:2582px;">Hire Add. Comm.</div>
<div class="t" style="top:479.8px;font-size:12.5px;color:#6f7a84;right:-11px;">(24,627.66)</div>
<div class="a" style="left:2556.5px;top:498.8px;width:385.5px;height:24px;background:#c9ced2;"></div>
<div class="t" style="top:504.2px;font-size:12.5px;color:#7b8791;letter-spacing:0.6px;left:2582px;">CVE</div>
<div class="t" style="top:504.2px;font-size:12.5px;color:#6f7a84;right:-11px;">2,038.64</div>
<div class="t" style="top:528.6px;font-size:12.5px;color:#4a4f54;font-weight:bold;left:2561px;">Total Running Cost</div>
<div class="t" style="top:528.6px;font-size:12.5px;color:#6f7a84;right:-11px;">634,148.69</div>
<div class="a" style="left:0px;top:0px;width:2942px;height:41.5px;background:#56687a;"></div>
<div class="a" style="left:25.5px;top:11.7px;width:21.5px;height:2px;background:#dfe4e8;"></div>
<div class="a" style="left:25.5px;top:17.9px;width:21.5px;height:2px;background:#dfe4e8;"></div>
<div class="a" style="left:25.5px;top:24px;width:21.5px;height:2px;background:#dfe4e8;"></div>
<div class="t" style="top:10.6px;font-size:15px;color:#dde2e6;font-weight:bold;letter-spacing:2.9px;left:66px;">CHARTERING</div>
<div class="t" style="top:13.5px;font-size:14.5px;color:#e3e7ea;font-weight:bold;left:2631px;transform:scaleX(1.049);transform-origin:0 0;">Network</div>
<div class="t" style="top:13.5px;font-size:14.5px;color:#e3e7ea;font-weight:bold;left:2743px;transform:scaleX(1.070);transform-origin:0 0;">Analytics</div>
<div class="t" style="top:13.5px;font-size:14.5px;color:#8796a4;font-weight:bold;left:2853px;transform:scaleX(1.051);transform-origin:0 0;">Documents</div>
<div class="a" style="left:0px;top:41.5px;width:73px;height:1392.5px;background:#676c70;"></div>
<div class="a" style="left:0px;top:114px;width:73px;height:73px;background:#6e8796;"></div>
<svg class="a" style="left:23px;top:56.5px;" width="21.5" height="21.5" viewBox="0 0 25 25"><path d="M7 2h13v3h-3v16a3 3 0 0 1-3 3H3a3 3 0 0 0 3-3V4a2 2 0 0 1 1-2zM9 8h6M9 11h6M9 14h6M9 17h6" fill="none" stroke="#c3c8cc" stroke-width="1.6"/></svg>
<div class="t" style="top:85.1px;font-size:11.7px;color:#cfd3d7;left:11.9px;text-shadow:0.3px 0 0 #cfd3d7;">Cargoes</div>
<svg class="a" style="left:23px;top:129.5px;" width="21.5" height="21.5" viewBox="0 0 25 25"><path d="M2 5l7-3 7 3 7-3v18l-7 3-7-3-7 3zM9 2v18M16 5v18" fill="none" stroke="#c3c8cc" stroke-width="1.6"/></svg>
<div class="t" style="top:158.1px;font-size:11.7px;color:#cfd3d7;left:8.3px;text-shadow:0.3px 0 0 #cfd3d7;">Estimates</div>
<svg class="a" style="left:23px;top:202.5px;" width="21.5" height="21.5" viewBox="0 0 25 25"><path d="M5 4h14v3h-3v14a3 3 0 0 1-3 3H3a3 3 0 0 0 3-3V9H2V6zM9 10h6M9 13h6M9 16h6M3 12l4 3" fill="none" stroke="#c3c8cc" stroke-width="1.6"/></svg>
<div class="t" style="top:231.1px;font-size:11.7px;color:#cfd3d7;left:13.2px;text-shadow:0.3px 0 0 #cfd3d7;">Fixtures</div>
<svg class="a" style="left:23px;top:275.5px;" width="21.5" height="21.5" viewBox="0 0 25 25"><path d="M3 2v20h20" fill="none" stroke="#c3c8cc" stroke-width="2.2"/><path d="M6 6h11M9 11h11M6 16h9" stroke="#c3c8cc" stroke-width="3"/></svg>
<div class="t" style="top:304.1px;font-size:11.7px;color:#cfd3d7;left:18.1px;text-shadow:0.3px 0 0 #cfd3d7;">Cargo</div>
<div class="t" style="top:315.4px;font-size:11.7px;color:#cfd3d7;left:9.6px;text-shadow:0.3px 0 0 #cfd3d7;">Schedule</div>
<svg class="a" style="left:23px;top:348.5px;" width="21.5" height="21.5" viewBox="0 0 25 25"><rect x="2" y="5" width="21" height="18" rx="2" fill="none" stroke="#c3c8cc" stroke-width="1.8"/><path d="M2 10h21M7 2v5M18 2v5" stroke="#c3c8cc" stroke-width="2"/><path d="M6 14h3v3H6zM11 14h3v3h-3zM16 14h3v3h-3zM6 18h3v3H6zM11 18h3v3h-3z" fill="#c3c8cc"/></svg>
<div class="t" style="top:377.1px;font-size:11.7px;color:#cfd3d7;left:5.1px;text-shadow:0.3px 0 0 #cfd3d7;">Scheduling</div>
<svg class="a" style="left:23px;top:421.5px;" width="21.5" height="21.5" viewBox="0 0 25 25"><path d="M3 4l4 6c2-2 4-2 6 0M8 13h14v10H8zM15 13v10M8 18h14M12 13c0-4 6-4 6 0" fill="none" stroke="#c3c8cc" stroke-width="1.6"/></svg>
<div class="t" style="top:450.1px;font-size:11.7px;color:#cfd3d7;left:19.7px;text-shadow:0.3px 0 0 #cfd3d7;">TC In</div>
<svg class="a" style="left:23px;top:494.5px;" width="21.5" height="21.5" viewBox="0 0 25 25"><path d="M3 4l4 6c2-2 4-2 6 0M8 13h14v10H8zM15 13v10M8 18h14M12 13c0-4 6-4 6 0" fill="none" stroke="#c3c8cc" stroke-width="1.6"/></svg>
<div class="t" style="top:523.1px;font-size:11.7px;color:#cfd3d7;left:15.1px;text-shadow:0.3px 0 0 #cfd3d7;">TC Out</div>
<svg class="a" style="left:23px;top:567.5px;" width="21.5" height="21.5" viewBox="0 0 25 25"><path d="M8 2a5 5 0 0 1 5 5c0 4-5 10-5 10S3 11 3 7a5 5 0 0 1 5-5z" fill="none" stroke="#c3c8cc" stroke-width="1.5"/><circle cx="8" cy="7" r="1.6" fill="#c3c8cc"/><path d="M14 12h10M14 16h10M12 20h12" stroke="#c3c8cc" stroke-width="1.6"/></svg>
<div class="t" style="top:596.1px;font-size:11.7px;color:#cfd3d7;left:19.7px;text-shadow:0.3px 0 0 #cfd3d7;">Open</div>
<div class="t" style="top:607.4px;font-size:11.7px;color:#cfd3d7;left:10.3px;text-shadow:0.3px 0 0 #cfd3d7;">Positions</div>
<svg class="a" style="left:23px;top:640.5px;" width="21.5" height="21.5" viewBox="0 0 25 25"><path d="M2 4c4-2 7-2 10 0 3-2 6-2 10 0v17c-4-2-7-2-10 0-3-2-6-2-10 0zM12 4v17M4 8h6M4 12h6M4 16h6M14 8h6M14 12h6M14 16h6" fill="none" stroke="#c3c8cc" stroke-width="1.5"/></svg>
<div class="t" style="top:669.1px;font-size:11.7px;color:#cfd3d7;left:18.1px;text-shadow:0.3px 0 0 #cfd3d7;">Cargo</div>
<div class="t" style="top:680.4px;font-size:11.7px;color:#cfd3d7;left:20.7px;text-shadow:0.3px 0 0 #cfd3d7;">Book</div>
<svg class="a" style="left:23px;top:713.5px;" width="21.5" height="21.5" viewBox="0 0 25 25"><path d="M13 1a5 5 0 0 1 5 5c0 4-5 9-5 9S8 10 8 6a5 5 0 0 1 5-5z" fill="#c3c8cc"/><circle cx="13" cy="6" r="1.8" fill="#676c70"/><path d="M7 12l-5 3 4 9 7-3 7 3 4-9-5-3M6 24l3-8M13 21v-4M20 24l-3-8" fill="none" stroke="#c3c8cc" stroke-width="1.5"/></svg>
<div class="t" style="top:742.1px;font-size:11.7px;color:#cfd3d7;left:16.1px;text-shadow:0.3px 0 0 #cfd3d7;">Market</div>
<div class="t" style="top:753.4px;font-size:11.7px;color:#cfd3d7;left:13.8px;text-shadow:0.3px 0 0 #cfd3d7;">Insights</div>
<svg class="a" style="left:23px;top:786.5px;" width="21.5" height="21.5" viewBox="0 0 25 25"><path d="M12 1a8 8 0 0 1 8 8c0 6-8 15-8 15S4 15 4 9a8 8 0 0 1 8-8z" fill="none" stroke="#c3c8cc" stroke-width="1.6"/><circle cx="12" cy="9" r="2.6" fill="none" stroke="#c3c8cc" stroke-width="1.5"/></svg>
<div class="t" style="top:815.1px;font-size:11.7px;color:#cfd3d7;left:17.7px;text-shadow:0.3px 0 0 #cfd3d7;">Action</div>
<div class="t" style="top:826.4px;font-size:11.7px;color:#cfd3d7;left:11.9px;text-shadow:0.3px 0 0 #cfd3d7;">Cargoes</div>
<div class="a" style="left:17.1px;top:1420.3px;width:38.4px;height:38.4px;background:#68a0ac;border-radius:19.2px;"></div>
<div class="t" style="top:1423.9px;font-size:26px;color:#e9ebeb;font-weight:bold;left:28.4px;">?</div>
<div class="a" style="left:114px;top:436px;width:1162px;height:971px;background:#e6e6e6;box-shadow:0 1px 9px 3px rgba(0,0,0,.13);"></div>
<div class="a" style="left:112px;top:436px;width:2px;height:971px;background:rgba(0,0,0,.15);"></div>
<div class="a" style="left:1276px;top:436px;width:2px;height:971px;background:rgba(0,0,0,.15);"></div>
<div class="a" style="left:114px;top:1407px;width:1162px;height:1.5px;background:rgba(0,0,0,.10);"></div>
<div class="a" style="left:114px;top:476px;width:2px;height:931px;background:#ececec;"></div>
<div class="a" style="left:114px;top:436px;width:1162px;height:40px;background:#474e53;"></div>
<div class="t" style="top:448.2px;font-size:15px;color:#e9ebed;font-weight:bold;letter-spacing:0.8px;left:129px;">TC TEST VESSEL1 AMPO-O0027 - Time Charter Out</div>
<div class="a" style="left:1208px;top:454.5px;width:9px;height:2.5px;background:#e9ebed;"></div>
<svg class="a" style="left:1248px;top:450px;" width="12" height="12" viewBox="0 0 12 12"><path d="M1.5 1.5l9 9M10.5 1.5l-9 9" stroke="#eef0f1" stroke-width="2.6"/></svg>
<svg class="a" style="left:131px;top:484px;" width="14" height="14" viewBox="0 0 14 14"><circle cx="5.5" cy="5.5" r="4" fill="none" stroke="#8d9aa6" stroke-width="1.3"/><path d="M8.5 8.5l4.5 4.5" stroke="#8d9aa6" stroke-width="1.8"/></svg>
<div class="a" style="left:152.8px;top:481px;width:1.3px;height:21px;background:#c9ccd0;"></div>
<div class="a" style="left:260.4px;top:481px;width:1.3px;height:21px;background:#c9ccd0;"></div>
<div class="a" style="left:290.4px;top:481px;width:1.3px;height:21px;background:#c9ccd0;"></div>
<div class="a" style="left:475.4px;top:481px;width:1.3px;height:21px;background:#c9ccd0;"></div>
<div class="a" style="left:551.4px;top:481px;width:1.3px;height:21px;background:#c9ccd0;"></div>
<div class="a" style="left:650.4px;top:481px;width:1.3px;height:21px;background:#c9ccd0;"></div>
<div class="a" style="left:719px;top:481px;width:1.3px;height:21px;background:#c9ccd0;"></div>
<div class="a" style="left:822px;top:481px;width:1.3px;height:21px;background:#c9ccd0;"></div>
<div class="a" style="left:907.4px;top:481px;width:1.3px;height:21px;background:#c9ccd0;"></div>
<div class="a" style="left:1076.9px;top:481px;width:1.3px;height:21px;background:#c9ccd0;"></div>
<svg class="a" style="left:163px;top:485px;" width="12" height="12" viewBox="0 0 12 12"><path d="M0 0h10l2 2v10H0z" fill="#6b7d8b"/><rect x="2.5" y="0" width="6" height="4" fill="#e6e6e6"/><rect x="6" y="0.8" width="1.6" height="2.4" fill="#6b7d8b"/><rect x="2.5" y="6.5" width="7" height="4.5" fill="#e6e6e6"/></svg>
<div class="t" style="top:486.1px;font-size:11.5px;color:#5b6c79;font-weight:bold;left:181px;transform:scaleX(0.894);transform-origin:0 0;">Save</div>
<svg class="a" style="left:242px;top:484px;" width="11" height="14" viewBox="0 0 11 14"><path d="M1 1h9v9l-3 3H1z M7 13v-3h3" fill="none" stroke="#c3c8cd" stroke-width="1.2"/></svg>
<svg class="a" style="left:272.5px;top:485.5px;" width="9.6" height="11.3" viewBox="0 0 11 13"><path d="M0 2.5h11v1.6H0zM3.5 0.6h4v2h-4zM1 4.6h9l-0.9 8.4H1.9z" fill="#6b7d8b"/></svg>
<svg class="a" style="left:301px;top:484.5px;" width="13" height="13" viewBox="0 0 13 13"><rect x="0" y="0" width="7" height="8" fill="#6b7d8b"/><rect x="5" y="4" width="8" height="9" fill="#6b7d8b" stroke="#e6e6e6" stroke-width="1"/></svg>
<svg class="a" style="left:317px;top:488px;" width="11" height="6.6" viewBox="0 0 11 6.6"><path d="M0 0h11 l-5.5 6.050000000000001 z" fill="#5b6c79"/></svg>
<svg class="a" style="left:364.5px;top:485.5px;" width="11.5" height="11.5" viewBox="0 0 13 13"><path d="M2 6.5a4.5 4.5 0 0 1 8-2.6M11 6.5a4.5 4.5 0 0 1-8 2.6" fill="none" stroke="#8d9aa6" stroke-width="1.6"/><path d="M8.6 1.2l2.6 2.9-3.6.6zM4.4 11.8L1.8 8.9l3.6-.6z" fill="#8d9aa6"/></svg>
<div class="t" style="top:486.1px;font-size:11.5px;color:#5b6c79;font-weight:bold;left:411px;">Other Info</div>
<div class="t" style="top:486.1px;font-size:11.5px;color:#5b6c79;font-weight:bold;left:484px;transform:scaleX(1.013);transform-origin:0 0;">Options</div>
<div class="t" style="top:486.1px;font-size:11.5px;color:#5b6c79;font-weight:bold;left:561px;">Hire Statement</div>
<div class="t" style="top:486.1px;font-size:11.5px;color:#5b6c79;font-weight:bold;left:660.5px;">Issue Bill</div>
<div class="t" style="top:486.1px;font-size:11.5px;color:#5b6c79;font-weight:bold;left:730px;transform:scaleX(0.985);transform-origin:0 0;">Commission</div>
<div class="t" style="top:486.1px;font-size:11.5px;color:#5b6c79;font-weight:bold;left:833px;transform:scaleX(0.977);transform-origin:0 0;">Sched a Voy</div>
<div class="t" style="top:486.1px;font-size:11.5px;color:#5b6c79;font-weight:bold;left:918px;transform:scaleX(0.980);transform-origin:0 0;">Estimate</div>
<div class="t" style="top:486.1px;font-size:11.5px;color:#5b6c79;font-weight:bold;left:1017px;">Report</div>
<svg class="a" style="left:533px;top:488px;" width="11" height="6.6" viewBox="0 0 11 6.6"><path d="M0 0h11 l-5.5 6.050000000000001 z" fill="#5b6c79"/></svg>
<svg class="a" style="left:803px;top:488px;" width="11" height="6.6" viewBox="0 0 11 6.6"><path d="M0 0h11 l-5.5 6.050000000000001 z" fill="#5b6c79"/></svg>
<svg class="a" style="left:1059px;top:488px;" width="11" height="6.6" viewBox="0 0 11 6.6"><path d="M0 0h11 l-5.5 6.050000000000001 z" fill="#5b6c79"/></svg>
<div class="a" style="left:1001px;top:485px;width:11.5px;height:12px;box-shadow:inset 0 0 0 1px #c9cdd2;"></div>
<svg class="a" style="left:1002px;top:486px;" width="10" height="10" viewBox="0 0 10 10"><path d="M1 8l3-4 2 2 3-4" stroke="#c3c8cd" fill="none"/></svg>
<div class="t" style="top:487.7px;font-size:7.5px;color:#8a939b;font-weight:bold;left:1086px;transform:scaleX(1.523);transform-origin:0 0;">•••</div>
<div class="a" style="left:114px;top:506.2px;width:1162px;height:1.5px;background:#bfc6cd;"></div>
<div class="t" style="top:520.4px;font-size:11.5px;color:#5b6068;right:2698px;">Vessel</div>
<div class="a" style="left:246.9px;top:515.4px;width:152.7px;height:20.2px;box-shadow:inset 0 0 0 1.2px #b7c0cb;"></div>
<div class="t" style="top:539.2px;font-size:11.5px;color:#5b6068;right:2698px;">TC Code</div>
<div class="a" style="left:246.9px;top:534.4px;width:152.7px;height:19.7px;box-shadow:inset 0 0 0 1.2px #b7c0cb;"></div>
<div class="t" style="top:557.8px;font-size:11.5px;color:#5b6068;right:2698px;">Charterer</div>
<div class="a" style="left:246.9px;top:552.9px;width:152.7px;height:20px;box-shadow:inset 0 0 0 1.2px #b7c0cb;"></div>
<div class="t" style="top:576.6px;font-size:11.5px;color:#5b6068;right:2698px;">Bill Via</div>
<div class="a" style="left:246.9px;top:571.7px;width:152.7px;height:19.9px;box-shadow:inset 0 0 0 1.2px #b7c0cb;"></div>
<div class="t" style="top:595.3px;font-size:11.5px;color:#5b6068;right:2698px;">Laycan From</div>
<div class="a" style="left:246.9px;top:590.4px;width:152.7px;height:20px;box-shadow:inset 0 0 0 1.2px #b7c0cb;"></div>
<div class="t" style="top:614.1px;font-size:11.5px;color:#5b6068;right:2698px;">Laycan To</div>
<div class="a" style="left:246.9px;top:609.2px;width:152.7px;height:20px;box-shadow:inset 0 0 0 1.2px #b7c0cb;"></div>
<div class="t" style="top:632.9px;font-size:11.5px;color:#5b6068;right:2698px;">TC COA ID</div>
<div class="a" style="left:246.9px;top:628px;width:152.7px;height:19.9px;box-shadow:inset 0 0 0 1.2px #b7c0cb;"></div>
<div class="a" style="left:364px;top:535.6px;width:34.4px;height:17.4px;background:#dcdfe2;"></div>
<div class="a" style="left:247px;top:532px;width:117px;height:38.5px;background:#e3e4e5;"></div>
<div class="t" style="top:520.4px;font-size:11.5px;color:#6f7d8a;left:254.5px;transform:scaleX(0.988);transform-origin:0 0;">TEST VESSEL1</div>
<div class="a" style="left:153px;top:597px;width:13px;height:13px;background:#eeeeee;box-shadow:inset 0 0 0 1.2px #8f959b;border-radius:2px;"></div>
<div class="t" style="top:520.4px;font-size:11.5px;color:#5b6068;right:2448px;">Date/Fixed By</div>
<div class="a" style="left:496.9px;top:515.4px;width:152.7px;height:20.2px;box-shadow:inset 0 0 0 1.2px #b7c0cb;"></div>
<div class="t" style="top:539.2px;font-size:11.5px;color:#5b6068;right:2448px;">Company</div>
<div class="a" style="left:496.9px;top:534.4px;width:152.7px;height:19.7px;box-shadow:inset 0 0 0 1.2px #b7c0cb;"></div>
<div class="t" style="top:557.8px;font-size:11.5px;color:#5b6068;right:2448px;">Department</div>
<div class="a" style="left:496.9px;top:552.9px;width:152.7px;height:20px;box-shadow:inset 0 0 0 1.2px #b7c0cb;"></div>
<div class="t" style="top:576.6px;font-size:11.5px;color:#5b6068;right:2448px;">Trade Area</div>
<div class="a" style="left:496.9px;top:571.7px;width:152.7px;height:19.9px;box-shadow:inset 0 0 0 1.2px #b7c0cb;"></div>
<div class="t" style="top:595.3px;font-size:11.5px;color:#5b6068;right:2448px;">Ref No.</div>
<div class="a" style="left:496.9px;top:590.4px;width:152.7px;height:20px;box-shadow:inset 0 0 0 1.2px #b7c0cb;"></div>
<div class="t" style="top:614.1px;font-size:11.5px;color:#5b6068;right:2448px;">Payment Terms</div>
<div class="a" style="left:496.9px;top:609.2px;width:152.7px;height:20px;box-shadow:inset 0 0 0 1.2px #b7c0cb;"></div>
<div class="t" style="top:632.9px;font-size:11.5px;color:#5b6068;right:2448px;">Contract Type</div>
<div class="a" style="left:496.9px;top:628px;width:152.7px;height:19.9px;box-shadow:inset 0 0 0 1.2px #b7c0cb;"></div>
<div class="t" style="top:651.6px;font-size:11.5px;color:#5b6068;right:2448px;">Ops Coordinator</div>
<div class="a" style="left:496.9px;top:646.7px;width:152.7px;height:19.9px;box-shadow:inset 0 0 0 1.2px #b7c0cb;"></div>
<div class="t" style="top:670.3px;font-size:11.5px;color:#5b6068;right:2448px;">Chtr Specialist</div>
<div class="a" style="left:496.9px;top:665.4px;width:152.7px;height:20px;box-shadow:inset 0 0 0 1.2px #b7c0cb;"></div>
<div class="t" style="top:689.1px;font-size:11.5px;color:#5b6068;right:2448px;">Conf Date GMT</div>
<div class="a" style="left:497.5px;top:684.8px;width:151.5px;height:18.7px;background:#dcdfe2;"></div>
<div class="a" style="left:496.9px;top:684.2px;width:152.7px;height:19.9px;box-shadow:inset 0 0 0 1.2px #b7c0cb;"></div>
<div class="a" style="left:571.4px;top:516px;width:1.2px;height:19px;background:#b7c0cb;"></div>
<div class="a" style="left:546.4px;top:609.8px;width:1.2px;height:18.8px;background:#b7c0cb;"></div>
<div class="t" style="top:520.4px;font-size:11.5px;color:#5a5f66;right:2375px;">03/31/26</div>
<div class="a" style="left:500px;top:539px;width:50px;height:12px;background:#d9dcde;"></div>
<div class="t" style="top:632.9px;font-size:11.5px;color:#5a5f66;left:504.5px;transform:scaleX(0.971);transform-origin:0 0;">TRIP TC</div>
<div class="t" style="top:670.3px;font-size:11.5px;color:#5a5f66;left:504.5px;">admin</div>
<div class="t" style="top:689.1px;font-size:11.5px;color:#5a5f66;right:2300px;">03/31/26 07:57</div>
<div class="t" style="top:520.4px;font-size:11.5px;color:#5b6068;right:2124px;">Status</div>
<div class="a" style="left:822px;top:515.4px;width:165.1px;height:20.2px;box-shadow:inset 0 0 0 1.2px #b7c0cb;"></div>
<div class="t" style="top:539.2px;font-size:11.5px;color:#5b6068;right:2124px;">Billing Period</div>
<div class="a" style="left:822px;top:534.4px;width:165.1px;height:19.7px;box-shadow:inset 0 0 0 1.2px #b7c0cb;"></div>
<div class="t" style="top:557.8px;font-size:11.5px;color:#5b6068;right:2124px;">Billing Schedule</div>
<div class="a" style="left:822px;top:552.9px;width:165.1px;height:20px;box-shadow:inset 0 0 0 1.2px #b7c0cb;"></div>
<div class="t" style="top:576.6px;font-size:11.5px;color:#5b6068;right:2124px;">Rebillable Admin Fee %</div>
<div class="a" style="left:822px;top:571.7px;width:165.1px;height:19.9px;box-shadow:inset 0 0 0 1.2px #b7c0cb;"></div>
<div class="t" style="top:595.3px;font-size:11.5px;color:#5b6068;right:2124px;">Currency/Exchange Rate</div>
<div class="a" style="left:822px;top:590.4px;width:165.1px;height:20px;box-shadow:inset 0 0 0 1.2px #b7c0cb;"></div>
<div class="t" style="top:614.1px;font-size:11.5px;color:#5b6068;right:2124px;">Ref Contract</div>
<div class="a" style="left:822px;top:609.2px;width:165.1px;height:20px;box-shadow:inset 0 0 0 1.2px #b7c0cb;"></div>
<div class="a" style="left:871.4px;top:591px;width:1.2px;height:18.8px;background:#b7c0cb;"></div>
<div class="t" style="top:520.4px;font-size:11.5px;color:#5a5f66;left:829px;">FIXED</div>
<div class="t" style="top:557.8px;font-size:11.5px;color:#5a5f66;left:829px;">IN ADVANCE</div>
<div class="t" style="top:576.6px;font-size:11.5px;color:#5a5f66;right:1962px;">0.00</div>
<div class="t" style="top:595.3px;font-size:11.5px;color:#5a5f66;left:829px;">USD</div>
<div class="t" style="top:595.3px;font-size:11.5px;color:#5a5f66;right:1962px;">1.000000</div>
<div class="a" style="left:685px;top:647.5px;width:301.5px;height:18.5px;background:#d8d8dd;"></div>
<div class="a" style="left:684.4px;top:646.9px;width:51.8px;height:19.7px;box-shadow:inset 0 0 0 1.2px #b7c0cb;"></div>
<div class="a" style="left:684.4px;top:665.4px;width:51.8px;height:20px;box-shadow:inset 0 0 0 1.2px #b7c0cb;"></div>
<div class="a" style="left:684.4px;top:684.2px;width:51.8px;height:19.9px;box-shadow:inset 0 0 0 1.2px #b7c0cb;"></div>
<div class="a" style="left:735px;top:646.9px;width:51.1px;height:19.7px;box-shadow:inset 0 0 0 1.2px #b7c0cb;"></div>
<div class="a" style="left:735px;top:665.4px;width:51.1px;height:20px;box-shadow:inset 0 0 0 1.2px #b7c0cb;"></div>
<div class="a" style="left:735px;top:684.2px;width:51.1px;height:19.9px;box-shadow:inset 0 0 0 1.2px #b7c0cb;"></div>
<div class="a" style="left:784.9px;top:646.9px;width:51.7px;height:19.7px;box-shadow:inset 0 0 0 1.2px #b7c0cb;"></div>
<div class="a" style="left:784.9px;top:665.4px;width:51.7px;height:20px;box-shadow:inset 0 0 0 1.2px #b7c0cb;"></div>
<div class="a" style="left:784.9px;top:684.2px;width:51.7px;height:19.9px;box-shadow:inset 0 0 0 1.2px #b7c0cb;"></div>
<div class="a" style="left:835.4px;top:646.9px;width:50.8px;height:19.7px;box-shadow:inset 0 0 0 1.2px #b7c0cb;"></div>
<div class="a" style="left:835.4px;top:665.4px;width:50.8px;height:20px;box-shadow:inset 0 0 0 1.2px #b7c0cb;"></div>
<div class="a" style="left:835.4px;top:684.2px;width:50.8px;height:19.9px;box-shadow:inset 0 0 0 1.2px #b7c0cb;"></div>
<div class="a" style="left:885px;top:646.9px;width:102.1px;height:19.7px;box-shadow:inset 0 0 0 1.2px #b7c0cb;"></div>
<div class="a" style="left:885px;top:665.4px;width:102.1px;height:20px;box-shadow:inset 0 0 0 1.2px #b7c0cb;"></div>
<div class="a" style="left:885px;top:684.2px;width:102.1px;height:19.9px;box-shadow:inset 0 0 0 1.2px #b7c0cb;"></div>
<div class="t" style="top:650.9px;font-size:11.5px;color:#737d88;left:691px;">Dur.</div>
<div class="t" style="top:650.9px;font-size:11.5px;color:#737d88;left:740px;">Unit</div>
<div class="t" style="top:650.9px;font-size:11.5px;color:#737d88;left:790px;">-Days</div>
<div class="t" style="top:650.9px;font-size:11.5px;color:#737d88;left:840.6px;">+Days</div>
<div class="t" style="top:650.9px;font-size:11.5px;color:#737d88;left:890px;">E/L Redel.</div>
<div class="t" style="top:670.3px;font-size:11.5px;color:#5b6068;right:2261px;">Min</div>
<div class="t" style="top:670.3px;font-size:11.5px;color:#5a5f66;right:2212px;">0</div>
<div class="t" style="top:670.3px;font-size:11.5px;color:#5a5f66;right:1962px;">03/31/26 00:30</div>
<div class="t" style="top:689.1px;font-size:11.5px;color:#5b6068;right:2261px;">Max</div>
<div class="t" style="top:689.1px;font-size:11.5px;color:#5a5f66;right:2212px;">0</div>
<div class="t" style="top:689.1px;font-size:11.5px;color:#5a5f66;right:1962px;">03/31/26 00:30</div>
<div class="t" style="top:533.3px;font-size:13.5px;color:#5d6268;left:1010px;transform:scaleX(0.932);transform-origin:0 0;">AMPO-O0027</div>
<svg class="a" style="left:1013px;top:557px;" width="7" height="12" viewBox="0 0 7 12"><path d="M0 0l6 6-6 6z" fill="#3c4146"/></svg>
<div class="t" style="top:557.1px;font-size:13px;color:#5d6268;left:1025px;transform:scaleX(0.965);transform-origin:0 0;">Invoices</div>
<div class="t" style="top:581.8px;font-size:13px;color:#5d6268;left:1023px;transform:scaleX(0.973);transform-origin:0 0;">Broker(s)</div>
<div class="t" style="top:606.8px;font-size:13px;color:#5d6268;left:1023px;transform:scaleX(0.974);transform-origin:0 0;">Voyage(s)</div>
<div class="t" style="top:630.3px;font-size:13px;color:#8099a9;left:1023px;transform:scaleX(0.964);transform-origin:0 0;">Attachment(s)</div>
<div class="a" style="left:222.6px;top:722.6px;width:763.9px;height:18.4px;background:#d8d8dd;"></div>
<div class="a" style="left:598.5px;top:741px;width:100.5px;height:37.8px;background:#dcdfe2;"></div>
<div class="a" style="left:498px;top:760px;width:100.5px;height:37.5px;background:#dcdfe2;"></div>
<div class="a" style="left:222px;top:722px;width:176.6px;height:19.6px;box-shadow:inset 0 0 0 1.2px #b7c0cb;"></div>
<div class="a" style="left:222px;top:740.4px;width:176.6px;height:20.2px;box-shadow:inset 0 0 0 1.2px #b7c0cb;"></div>
<div class="a" style="left:222px;top:759.4px;width:176.6px;height:20px;box-shadow:inset 0 0 0 1.2px #b7c0cb;"></div>
<div class="a" style="left:397.4px;top:722px;width:101.2px;height:19.6px;box-shadow:inset 0 0 0 1.2px #b7c0cb;"></div>
<div class="a" style="left:397.4px;top:740.4px;width:101.2px;height:20.2px;box-shadow:inset 0 0 0 1.2px #b7c0cb;"></div>
<div class="a" style="left:397.4px;top:759.4px;width:101.2px;height:20px;box-shadow:inset 0 0 0 1.2px #b7c0cb;"></div>
<div class="a" style="left:497.4px;top:722px;width:101.7px;height:19.6px;box-shadow:inset 0 0 0 1.2px #b7c0cb;"></div>
<div class="a" style="left:497.4px;top:740.4px;width:101.7px;height:20.2px;box-shadow:inset 0 0 0 1.2px #b7c0cb;"></div>
<div class="a" style="left:497.4px;top:759.4px;width:101.7px;height:20px;box-shadow:inset 0 0 0 1.2px #b7c0cb;"></div>
<div class="a" style="left:597.9px;top:722px;width:101.7px;height:19.6px;box-shadow:inset 0 0 0 1.2px #b7c0cb;"></div>
<div class="a" style="left:597.9px;top:740.4px;width:101.7px;height:20.2px;box-shadow:inset 0 0 0 1.2px #b7c0cb;"></div>
<div class="a" style="left:597.9px;top:759.4px;width:101.7px;height:20px;box-shadow:inset 0 0 0 1.2px #b7c0cb;"></div>
<div class="a" style="left:698.4px;top:722px;width:288.7px;height:19.6px;box-shadow:inset 0 0 0 1.2px #b7c0cb;"></div>
<div class="a" style="left:698.4px;top:740.4px;width:288.7px;height:20.2px;box-shadow:inset 0 0 0 1.2px #b7c0cb;"></div>
<div class="a" style="left:698.4px;top:759.4px;width:288.7px;height:20px;box-shadow:inset 0 0 0 1.2px #b7c0cb;"></div>
<div class="a" style="left:397.4px;top:778.2px;width:101.2px;height:19.9px;box-shadow:inset 0 0 0 1.2px #b7c0cb;"></div>
<div class="a" style="left:497.4px;top:778.2px;width:101.7px;height:19.9px;box-shadow:inset 0 0 0 1.2px #b7c0cb;"></div>
<div class="a" style="left:597.9px;top:778.2px;width:101.7px;height:19.9px;box-shadow:inset 0 0 0 1.2px #b7c0cb;"></div>
<div class="t" style="top:725.6px;font-size:11.5px;color:#737d88;left:228.7px;">Port</div>
<div class="t" style="top:725.6px;font-size:11.5px;color:#737d88;left:402.6px;">Est GMT</div>
<div class="t" style="top:725.6px;font-size:11.5px;color:#737d88;left:502.6px;">Proj/Act GMT</div>
<div class="t" style="top:725.6px;font-size:11.5px;color:#737d88;left:602.6px;">Difference</div>
<div class="t" style="top:725.6px;font-size:11.5px;color:#737d88;left:702.6px;">Remarks</div>
<div class="t" style="top:745.3px;font-size:11.5px;color:#5b6068;right:2723.5px;">Delivery</div>
<div class="t" style="top:764.1px;font-size:11.5px;color:#5b6068;right:2723.5px;">Redelivery</div>
<div class="t" style="top:745.3px;font-size:11.5px;color:#5a5f66;left:229px;">HOUSTON</div>
<div class="t" style="top:764.1px;font-size:11.5px;color:#5a5f66;left:229px;">CHINA</div>
<div class="t" style="top:745.3px;font-size:11.5px;color:#5a5f66;right:2449.4px;">03/31/26 00:30</div>
<div class="t" style="top:764.1px;font-size:11.5px;color:#5a5f66;right:2449.4px;">05/10/26 19:02</div>
<div class="t" style="top:745.3px;font-size:11.5px;color:#5a5f66;right:2249.4px;">0.00</div>
<div class="t" style="top:764.1px;font-size:11.5px;color:#5a5f66;right:2249.4px;">0.00</div>
<div class="t" style="top:782.9px;font-size:11.5px;color:#5b6068;right:2548px;">Duration/Basis (days)</div>
<div class="t" style="top:782.9px;font-size:11.5px;color:#5a5f66;right:2449.4px;">40.7728</div>
<div class="t" style="top:782.9px;font-size:11.5px;color:#5a5f66;right:2350px;">0.0000</div>
<div class="t" style="top:782.9px;font-size:11.5px;color:#5a5f66;left:604px;">Custom</div>
<div class="a" style="left:716px;top:784.5px;width:12px;height:12px;background:#eeeeee;box-shadow:inset 0 0 0 1.2px #8f959b;border-radius:2px;"></div>
<div class="t" style="top:785.6px;font-size:11.5px;color:#5b6068;left:732px;">Intercompany</div>
<div class="t" style="top:782.9px;font-size:11.5px;color:#5b6068;right:2036px;">IC Company</div>
<div class="a" style="left:910px;top:778.8px;width:76.5px;height:18.7px;background:#dcdfe2;"></div>
<div class="a" style="left:909.4px;top:778.2px;width:77.7px;height:19.9px;box-shadow:inset 0 0 0 1.2px #b7c0cb;"></div>
<div class="t" style="top:801.6px;font-size:11.5px;color:#5b6068;right:2037px;">IC Adj %</div>
<div class="a" style="left:910px;top:797.5px;width:76.5px;height:18.5px;background:#dcdfe2;"></div>
<div class="a" style="left:909.4px;top:796.9px;width:77.7px;height:19.7px;box-shadow:inset 0 0 0 1.2px #b7c0cb;"></div>
<div class="a" style="left:166px;top:803.5px;width:12px;height:12px;background:#eeeeee;box-shadow:inset 0 0 0 1.2px #8f959b;border-radius:2px;"></div>
<div class="t" style="top:804.6px;font-size:11.5px;color:#5b6068;left:182px;">Use Local Time</div>
<div class="a" style="left:716px;top:822px;width:12px;height:12px;background:#eeeeee;box-shadow:inset 0 0 0 1.2px #8f959b;border-radius:2px;"></div>
<div class="t" style="top:823.4px;font-size:11.5px;color:#5b6068;left:732px;">Add All Off Hires</div>
<div class="t" style="top:834.4px;font-size:11.5px;color:#3f6a85;font-weight:bold;left:156px;transform:scaleX(0.990);transform-origin:0 0;">Pricing</div>
<div class="a" style="left:148.6px;top:849px;width:54.4px;height:3.8px;background:#2f607e;"></div>
<div class="t" style="top:834.4px;font-size:11.5px;color:#7d99aa;font-weight:bold;left:212px;transform:scaleX(0.978);transform-origin:0 0;">Bunkers</div>
<div class="t" style="top:834.4px;font-size:11.5px;color:#7d99aa;font-weight:bold;left:274.6px;transform:scaleX(0.981);transform-origin:0 0;">Exposure</div>
<div class="t" style="top:834.4px;font-size:11.5px;color:#7d99aa;font-weight:bold;left:343px;transform:scaleX(0.990);transform-origin:0 0;">Performance</div>
<div class="t" style="top:834.4px;font-size:11.5px;color:#7d99aa;font-weight:bold;left:429.6px;transform:scaleX(0.979);transform-origin:0 0;">Notice</div>
<div class="t" style="top:834.4px;font-size:11.5px;color:#7d99aa;font-weight:bold;left:481px;transform:scaleX(0.996);transform-origin:0 0;">Off Hire</div>
<div class="t" style="top:834.4px;font-size:11.5px;color:#7d99aa;font-weight:bold;left:540px;transform:scaleX(0.983);transform-origin:0 0;">Inv Items</div>
<div class="t" style="top:834.4px;font-size:11.5px;color:#7d99aa;font-weight:bold;left:606px;transform:scaleX(0.996);transform-origin:0 0;">Linked Trades</div>
<div class="t" style="top:834.4px;font-size:11.5px;color:#7d99aa;font-weight:bold;left:700px;transform:scaleX(0.981);transform-origin:0 0;">Lease</div>
<div class="t" style="top:834.4px;font-size:11.5px;color:#7d99aa;font-weight:bold;left:749.6px;transform:scaleX(0.963);transform-origin:0 0;">Emissions</div>
<div class="a" style="left:147.5px;top:853px;width:845.5px;height:151px;box-shadow:inset 0 0 0 1.2px #b7c0cb;"></div>
<div class="a" style="left:148.7px;top:854.2px;width:824.3px;height:16.8px;background:#d8d8dd;"></div>
<div class="a" style="left:147.5px;top:870.4px;width:825.5px;height:1.2px;background:#c3c7d0;"></div>
<div class="a" style="left:248.4px;top:854px;width:1.2px;height:17px;background:#c3c7d0;"></div>
<div class="a" style="left:323.4px;top:854px;width:1.2px;height:17px;background:#c3c7d0;"></div>
<div class="a" style="left:385.9px;top:854px;width:1.2px;height:17px;background:#c3c7d0;"></div>
<div class="a" style="left:448.4px;top:854px;width:1.2px;height:17px;background:#c3c7d0;"></div>
<div class="a" style="left:548.4px;top:854px;width:1.2px;height:17px;background:#c3c7d0;"></div>
<div class="a" style="left:648.4px;top:854px;width:1.2px;height:17px;background:#c3c7d0;"></div>
<div class="a" style="left:736px;top:854px;width:1.2px;height:17px;background:#c3c7d0;"></div>
<div class="a" style="left:798.4px;top:854px;width:1.2px;height:17px;background:#c3c7d0;"></div>
<div class="a" style="left:861px;top:854px;width:1.2px;height:17px;background:#c3c7d0;"></div>
<div class="t" style="top:856.4px;font-size:11.5px;color:#737d88;left:153.5px;">Hire Rate</div>
<div class="t" style="top:856.4px;font-size:11.5px;color:#737d88;left:252.6px;">Rate Type</div>
<div class="t" style="top:856.4px;font-size:11.5px;color:#737d88;left:327.7px;">Code</div>
<div class="t" style="top:856.4px;font-size:11.5px;color:#737d88;left:390px;">Lock</div>
<div class="t" style="top:856.4px;font-size:11.5px;color:#737d88;left:452.6px;">From GMT</div>
<div class="t" style="top:856.4px;font-size:11.5px;color:#737d88;left:553px;">To GMT</div>
<div class="t" style="top:856.4px;font-size:11.5px;color:#737d88;left:652.6px;">Duration</div>
<div class="t" style="top:856.4px;font-size:11.5px;color:#737d88;left:740px;">Period</div>
<div class="t" style="top:856.4px;font-size:11.5px;color:#737d88;left:803px;">TCL Ins</div>
<div class="t" style="top:856.4px;font-size:11.5px;color:#737d88;left:865px;">Comments</div>
<div class="t" style="top:878.1px;font-size:11.5px;color:#5a5f66;right:2701px;">12,000.0000</div>
<div class="t" style="top:878.1px;font-size:11.5px;color:#5a5f66;left:252px;">Per day</div>
<div class="t" style="top:878.1px;font-size:11.5px;color:#5a5f66;right:2401px;">03/31/26 00:30</div>
<div class="t" style="top:878.1px;font-size:11.5px;color:#5a5f66;right:2301px;">05/10/26 19:02</div>
<div class="t" style="top:878.1px;font-size:11.5px;color:#5a5f66;right:2213.4px;">40.772789</div>
<div class="t" style="top:878.1px;font-size:11.5px;color:#5a5f66;left:739.5px;">Days</div>
<div class="t" style="top:878.1px;font-size:11.5px;color:#5a5f66;right:2088.5px;">0.00</div>
<div class="t" style="top:896.1px;font-size:12px;color:#5f7f93;left:522.6px;">Add New Row</div>
<div class="a" style="left:147.5px;top:1022px;width:845.5px;height:150px;box-shadow:inset 0 0 0 1.2px #b7c0cb;"></div>
<div class="a" style="left:148.7px;top:1023.2px;width:824.3px;height:16.8px;background:#d8d8dd;"></div>
<div class="a" style="left:147.5px;top:1039.4px;width:825.5px;height:1.2px;background:#c3c7d0;"></div>
<div class="a" style="left:273px;top:1023px;width:1.2px;height:17px;background:#c3c7d0;"></div>
<div class="a" style="left:335.9px;top:1023px;width:1.2px;height:17px;background:#c3c7d0;"></div>
<div class="a" style="left:398.4px;top:1023px;width:1.2px;height:17px;background:#c3c7d0;"></div>
<div class="a" style="left:511px;top:1023px;width:1.2px;height:17px;background:#c3c7d0;"></div>
<div class="a" style="left:536px;top:1023px;width:1.2px;height:17px;background:#c3c7d0;"></div>
<div class="a" style="left:636px;top:1023px;width:1.2px;height:17px;background:#c3c7d0;"></div>
<div class="a" style="left:735.4px;top:1023px;width:1.2px;height:17px;background:#c3c7d0;"></div>
<div class="t" style="top:1025.2px;font-size:11.5px;color:#737d88;left:153.6px;">Broker</div>
<div class="t" style="top:1025.2px;font-size:11.5px;color:#737d88;left:277.6px;">Rate</div>
<div class="t" style="top:1025.2px;font-size:11.5px;color:#737d88;left:340.8px;">Type</div>
<div class="t" style="top:1025.2px;font-size:11.5px;color:#737d88;left:402.7px;">Payment Method</div>
<div class="t" style="top:1025.2px;font-size:11.5px;color:#737d88;left:515px;">M</div>
<div class="t" style="top:1025.2px;font-size:11.5px;color:#737d88;left:539.7px;">From GMT</div>
<div class="t" style="top:1025.2px;font-size:11.5px;color:#737d88;left:640.5px;">To GMT</div>
<div class="t" style="top:1025.2px;font-size:11.5px;color:#737d88;left:740px;">Remarks</div>
<div class="t" style="top:1045.9px;font-size:12px;color:#5f7f93;left:522.6px;">Add New Row</div>
<div class="a" style="left:147.5px;top:1190.5px;width:845.5px;height:206.9px;box-shadow:inset 0 0 0 1.2px #b7c0cb;"></div>
<div class="a" style="left:148.7px;top:1191.7px;width:843.7px;height:16.8px;background:#d8d8dd;"></div>
<div class="a" style="left:147.5px;top:1207.9px;width:844.9px;height:1.2px;background:#c3c7d0;"></div>
<div class="a" style="left:211px;top:1191.5px;width:1.2px;height:17px;background:#c3c7d0;"></div>
<div class="a" style="left:361px;top:1191.5px;width:1.2px;height:17px;background:#c3c7d0;"></div>
<div class="a" style="left:461px;top:1191.5px;width:1.2px;height:17px;background:#c3c7d0;"></div>
<div class="a" style="left:536px;top:1191.5px;width:1.2px;height:17px;background:#c3c7d0;"></div>
<div class="a" style="left:586px;top:1191.5px;width:1.2px;height:17px;background:#c3c7d0;"></div>
<div class="a" style="left:686px;top:1191.5px;width:1.2px;height:17px;background:#c3c7d0;"></div>
<div class="a" style="left:785.8px;top:1191.5px;width:1.2px;height:17px;background:#c3c7d0;"></div>
<div class="t" style="top:1193.8px;font-size:11.5px;color:#737d88;left:153.6px;">Code</div>
<div class="t" style="top:1193.8px;font-size:11.5px;color:#737d88;left:215px;">Description</div>
<div class="t" style="top:1193.8px;font-size:11.5px;color:#737d88;left:365px;">Rate Type</div>
<div class="t" style="top:1193.8px;font-size:11.5px;color:#737d88;left:465px;">Rate</div>
<div class="t" style="top:1193.8px;font-size:11.5px;color:#737d88;left:540px;">Comm</div>
<div class="t" style="top:1193.8px;font-size:11.5px;color:#737d88;left:590px;">From GMT</div>
<div class="t" style="top:1193.8px;font-size:11.5px;color:#737d88;left:690px;">To GMT</div>
<div class="t" style="top:1193.8px;font-size:11.5px;color:#737d88;left:790px;">Remarks</div>
<div class="t" style="top:1215.4px;font-size:11.5px;color:#4f545a;left:152px;">BALLA</div>
<div class="t" style="top:1215.4px;font-size:11.5px;color:#4f545a;left:214.4px;">Ballast Bonus</div>
<div class="t" style="top:1215.4px;font-size:11.5px;color:#4f545a;left:364.5px;">Lumpsum</div>
<div class="t" style="top:1215.4px;font-size:11.5px;color:#4f545a;right:2413px;">0.00</div>
<div class="a" style="left:542.5px;top:1212.3px;width:13px;height:13px;background:#eeeeee;box-shadow:inset 0 0 0 1.2px #8f959b;border-radius:2px;"></div>
<div class="a" style="left:148.8px;top:1230.4px;width:843px;height:18.4px;background:#d7dcdf;"></div>
<div class="t" style="top:1234.2px;font-size:11.5px;color:#4f545a;left:152px;">CABLE</div>
<div class="t" style="top:1234.2px;font-size:11.5px;color:#4f545a;left:214.4px;">Gratuities</div>
<div class="t" style="top:1234.2px;font-size:11.5px;color:#4f545a;left:364.5px;">Per 30 days</div>
<div class="t" style="top:1234.2px;font-size:11.5px;color:#4f545a;right:2413px;">0.00</div>
<div class="a" style="left:542.5px;top:1231.1px;width:13px;height:13px;background:#eeeeee;box-shadow:inset 0 0 0 1.2px #8f959b;border-radius:2px;"></div>
<div class="t" style="top:1234.2px;font-size:11.5px;color:#4f545a;right:2263.4px;">03/31/26 00:30</div>
<div class="t" style="top:1252.9px;font-size:11.5px;color:#4f545a;left:152px;">VICTU</div>
<div class="t" style="top:1252.9px;font-size:11.5px;color:#4f545a;left:214.4px;">Victualling</div>
<div class="t" style="top:1252.9px;font-size:11.5px;color:#4f545a;left:364.5px;">Per 30 days</div>
<div class="t" style="top:1252.9px;font-size:11.5px;color:#4f545a;right:2413px;">0.00</div>
<div class="a" style="left:542.5px;top:1249.8px;width:13px;height:13px;background:#eeeeee;box-shadow:inset 0 0 0 1.2px #8f959b;border-radius:2px;"></div>
<div class="t" style="top:1252.9px;font-size:11.5px;color:#4f545a;right:2263.4px;">03/31/26 00:30</div>
<div class="a" style="left:148.8px;top:1267.9px;width:843px;height:18.4px;background:#d7dcdf;"></div>
<div class="t" style="top:1271.7px;font-size:11.5px;color:#4f545a;left:152px;">ALLOW</div>
<div class="t" style="top:1271.7px;font-size:11.5px;color:#4f545a;left:214.4px;">Repr. Exp. / Allowances</div>
<div class="t" style="top:1271.7px;font-size:11.5px;color:#4f545a;left:364.5px;">Per 30 days</div>
<div class="t" style="top:1271.7px;font-size:11.5px;color:#4f545a;right:2413px;">0.00</div>
<div class="a" style="left:542.5px;top:1268.6px;width:13px;height:13px;background:#eeeeee;box-shadow:inset 0 0 0 1.2px #8f959b;border-radius:2px;"></div>
<div class="t" style="top:1271.7px;font-size:11.5px;color:#4f545a;right:2263.4px;">03/31/26 00:30</div>
<div class="t" style="top:1290.5px;font-size:11.5px;color:#4f545a;left:152px;">LASHS</div>
<div class="t" style="top:1290.5px;font-size:11.5px;color:#4f545a;left:214.4px;">Lashing and Stowage</div>
<div class="t" style="top:1290.5px;font-size:11.5px;color:#4f545a;left:364.5px;">Per 30 days</div>
<div class="t" style="top:1290.5px;font-size:11.5px;color:#4f545a;right:2413px;">0.00</div>
<div class="a" style="left:542.5px;top:1287.4px;width:13px;height:13px;background:#eeeeee;box-shadow:inset 0 0 0 1.2px #8f959b;border-radius:2px;"></div>
<div class="t" style="top:1290.5px;font-size:11.5px;color:#4f545a;right:2263.4px;">03/31/26 00:30</div>
<div class="a" style="left:148.8px;top:1305.4px;width:843px;height:18.4px;background:#d7dcdf;"></div>
<div class="t" style="top:1309.3px;font-size:11.5px;color:#4f545a;left:152px;">ILOHC</div>
<div class="t" style="top:1309.3px;font-size:11.5px;color:#4f545a;left:214.4px;">ILOHC</div>
<div class="t" style="top:1309.3px;font-size:11.5px;color:#4f545a;left:364.5px;">Lumpsum</div>
<div class="t" style="top:1309.3px;font-size:11.5px;color:#4f545a;right:2413px;">0.00</div>
<div class="a" style="left:542.5px;top:1306.1px;width:13px;height:13px;background:#eeeeee;box-shadow:inset 0 0 0 1.2px #8f959b;border-radius:2px;"></div>
<div class="t" style="top:1328px;font-size:11.5px;color:#4f545a;left:152px;">INTHC</div>
<div class="t" style="top:1328px;font-size:11.5px;color:#4f545a;left:214.4px;">Intermediate HC</div>
<div class="t" style="top:1328px;font-size:11.5px;color:#4f545a;left:364.5px;">Lumpsum</div>
<div class="t" style="top:1328px;font-size:11.5px;color:#4f545a;right:2413px;">0.00</div>
<div class="a" style="left:542.5px;top:1324.9px;width:13px;height:13px;background:#eeeeee;box-shadow:inset 0 0 0 1.2px #8f959b;border-radius:2px;"></div>
<div class="t" style="top:1346.1px;font-size:12px;color:#5f7f93;left:578.6px;">Add New Row</div>
<svg class="a" style="left:154px;top:1377.5px;" width="13" height="15" viewBox="0 0 13 15"><path d="M12 0.5v14L1 7.5z" fill="#8f8f8f"/></svg>
<div class="a" style="left:176.4px;top:1378px;width:709.4px;height:13.6px;background:#959595;border-radius:7px;"></div>
<svg class="a" style="left:972px;top:1377.5px;" width="13" height="15" viewBox="0 0 13 15"><path d="M1 0.5v14l11-7z" fill="#8f8f8f"/></svg>
<div class="t" style="top:1209.4px;font-size:11.5px;color:#3f6a85;font-weight:bold;left:1006px;transform:scaleX(0.988);transform-origin:0 0;">Remarks</div>
<div class="a" style="left:998.5px;top:1224.6px;width:63.5px;height:3.4px;background:#2f607e;"></div>
<div class="t" style="top:1209.4px;font-size:11.5px;color:#7d99aa;font-weight:bold;left:1071px;transform:scaleX(0.992);transform-origin:0 0;">Notes to Operations</div>
<div class="t" style="top:1209.4px;font-size:11.5px;color:#7d99aa;font-weight:bold;left:1197px;transform:scaleX(0.990);transform-origin:0 0;">Roles</div>
<div class="a" style="left:996.9px;top:1227.7px;width:265.7px;height:95.4px;box-shadow:inset 0 0 0 1.2px #b7c0cb;"></div>
<div class="t" style="top:1326.4px;font-size:11.5px;color:#5b6068;right:1849px;">User Group</div>
<div class="a" style="left:1096.8px;top:1321.9px;width:152.8px;height:19.7px;box-shadow:inset 0 0 0 1.2px #b7c0cb;"></div>
<div class="t" style="top:1345.2px;font-size:11.5px;color:#5b6068;right:1849px;">User</div>
<div class="a" style="left:1096.8px;top:1340.4px;width:152.8px;height:20px;box-shadow:inset 0 0 0 1.2px #b7c0cb;"></div>
<div class="t" style="top:1382.8px;font-size:11.5px;color:#5b6068;right:1811px;">Valuation ID</div>
<div class="a" style="left:1134.1px;top:1377.9px;width:128.5px;height:19.9px;box-shadow:inset 0 0 0 1.2px #b7c0cb;"></div>
<div class="a" style="left:1289px;top:580.5px;width:1637.5px;height:843.5px;background:#ffffff;box-shadow:0 1px 9px 3px rgba(0,0,0,.13);"></div>
<div class="a" style="left:1289px;top:540.5px;width:1634px;height:38px;box-shadow:0 1px 9px 3px rgba(0,0,0,.13);"></div>
<div class="a" style="left:1287px;top:540.5px;width:2px;height:883.5px;background:rgba(0,0,0,.17);"></div>
<div class="a" style="left:2923px;top:540.5px;width:2px;height:40px;background:rgba(0,0,0,.15);"></div>
<div class="a" style="left:2926.5px;top:580.5px;width:2px;height:843.5px;background:rgba(0,0,0,.15);"></div>
<div class="a" style="left:1289px;top:1424px;width:1637.5px;height:1.5px;background:rgba(0,0,0,.10);"></div>
<div class="a" style="left:1289px;top:540.5px;width:1634px;height:40.5px;background:#222b33;"></div>
<div class="a" style="left:1289px;top:580.5px;width:1637.5px;height:843.5px;background:#ffffff;"></div>
<svg class="a" style="left:2758px;top:552px;" width="11" height="11" viewBox="0 0 11 11"><path d="M4 2H1v8h8V7M5.5 1H10v4.5M10 1L5 6" fill="none" stroke="#56606a" stroke-width="1.1"/></svg>
<div class="a" style="left:2807px;top:560px;width:9px;height:3px;background:#f2f3f4;"></div>
<div class="a" style="left:2856px;top:557.3px;width:10.3px;height:8.5px;box-shadow:inset 0 0 0 2.2px #f2f3f4;border-radius:1px;"></div>
<svg class="a" style="left:2894px;top:556px;" width="12" height="12" viewBox="0 0 12 12"><path d="M1.5 1.5l9 9M10.5 1.5l-9 9" stroke="#ffffff" stroke-width="2.8"/></svg>
<div class="t" style="top:589.2px;font-size:17px;color:#0d0f12;font-weight:bold;left:1301px;transform:scaleX(1.144);transform-origin:0 0;">Create New Voyage</div>
<div class="t" style="top:589.2px;font-size:17px;color:#1f4e6e;font-weight:bold;left:1495px;transform:scaleX(1.101);transform-origin:0 0;">Voyages /</div>
<div class="t" style="top:589.2px;font-size:17px;color:#0d0f12;font-weight:bold;left:1591.6px;transform:scaleX(1.108);transform-origin:0 0;">TEST VESSEL1 40</div>
<svg class="a" style="left:2356px;top:590px;" width="16" height="14" viewBox="0 0 16 14"><rect x="0.7" y="0.7" width="14.6" height="12.6" fill="none" stroke="#3d6a87" stroke-width="1.4"/><path d="M0.7 4.5h14.6M0.7 9h14.6M5.5 0.7v12.6M10.5 0.7v12.6" stroke="#3d6a87" stroke-width="1"/></svg>
<svg class="a" style="left:2401px;top:590px;" width="18" height="14" viewBox="0 0 18 14"><path d="M2 11a7.2 7.2 0 0 1 14 0" fill="none" stroke="#3d6a87" stroke-width="2"/><path d="M8 12l5-6" stroke="#3d6a87" stroke-width="2"/></svg>
<svg class="a" style="left:2446.5px;top:588.5px;" width="17" height="17" viewBox="0 0 17 17"><circle cx="8.5" cy="8.5" r="8" fill="#3d6a87"/><path d="M4 3c2 1 4 0 5 2s-2 2.6-1 4.6 3 1 3 3.4-2.6 2.6-2.6 2.6M12 1.6c1 2 2.6 2 3.6 4.4" stroke="#fff" stroke-width="1.5" fill="none"/></svg>
<svg class="a" style="left:1305px;top:619px;" width="12" height="12" viewBox="0 0 12 12"><path d="M6 0.5v11M0.5 6h11" stroke="#c5cbd1" stroke-width="1.2" fill="none"/></svg>
<div class="a" style="left:1324.8px;top:615px;width:1.3px;height:21px;background:#d3d7dc;"></div>
<div class="a" style="left:1354.8px;top:615px;width:1.3px;height:21px;background:#d3d7dc;"></div>
<div class="a" style="left:1465.3px;top:615px;width:1.3px;height:21px;background:#d3d7dc;"></div>
<div class="a" style="left:1531.3px;top:615px;width:1.3px;height:21px;background:#d3d7dc;"></div>
<div class="a" style="left:1560.9px;top:615px;width:1.3px;height:21px;background:#d3d7dc;"></div>
<div class="a" style="left:1662.3px;top:615px;width:1.3px;height:21px;background:#d3d7dc;"></div>
<div class="a" style="left:1718.3px;top:615px;width:1.3px;height:21px;background:#d3d7dc;"></div>
<div class="a" style="left:1819.9px;top:615px;width:1.3px;height:21px;background:#d3d7dc;"></div>
<div class="a" style="left:1932.9px;top:615px;width:1.3px;height:21px;background:#d3d7dc;"></div>
<div class="a" style="left:1987.3px;top:615px;width:1.3px;height:21px;background:#d3d7dc;"></div>
<div class="a" style="left:2066.9px;top:615px;width:1.3px;height:21px;background:#d3d7dc;"></div>
<svg class="a" style="left:1333.5px;top:618.5px;" width="14" height="14" viewBox="0 0 14 14"><circle cx="5.5" cy="5.5" r="4" fill="none" stroke="#8d9aa6" stroke-width="1.3"/><path d="M8.5 8.5l4.5 4.5" stroke="#8d9aa6" stroke-width="1.8"/></svg>
<svg class="a" style="left:1365px;top:619px;" width="12" height="12" viewBox="0 0 12 12"><path d="M0 0h10l2 2v10H0z" fill="#5d7386"/><rect x="2.5" y="0" width="6" height="4" fill="#fff"/><rect x="6" y="0.8" width="1.6" height="2.4" fill="#5d7386"/><rect x="2.5" y="6.5" width="7" height="4.5" fill="#fff"/></svg>
<div class="t" style="top:620.1px;font-size:11.5px;color:#4d6272;font-weight:bold;left:1382.6px;transform:scaleX(0.908);transform-origin:0 0;">Save</div>
<svg class="a" style="left:1430px;top:619px;" width="13" height="13" viewBox="0 0 13 13"><rect x="0" y="0" width="7" height="8" fill="#5d7386"/><rect x="5" y="4" width="8" height="9" fill="#5d7386" stroke="#fff" stroke-width="1"/></svg>
<svg class="a" style="left:1447px;top:622px;" width="11" height="6.6" viewBox="0 0 11 6.6"><path d="M0 0h11 l-5.5 6.050000000000001 z" fill="#4d6272"/></svg>
<svg class="a" style="left:1476.5px;top:619.5px;" width="9.6" height="11.3" viewBox="0 0 11 13"><path d="M0 2.5h11v1.6H0zM3.5 0.6h4v2h-4zM1 4.6h9l-0.9 8.4H1.9z" fill="#5d7386"/></svg>
<svg class="a" style="left:1510.5px;top:619.5px;" width="11.5" height="11.5" viewBox="0 0 13 13"><path d="M2 6.5a4.5 4.5 0 0 1 8-2.6M11 6.5a4.5 4.5 0 0 1-8 2.6" fill="none" stroke="#8d9aa6" stroke-width="1.6"/><path d="M8.6 1.2l2.6 2.9-3.6.6zM4.4 11.8L1.8 8.9l3.6-.6z" fill="#8d9aa6"/></svg>
<svg class="a" style="left:1542px;top:619px;" width="8" height="12" viewBox="0 0 8 12"><path d="M6.5 1L1.5 6l5 5" fill="none" stroke="#4f6a80" stroke-width="1.5"/></svg>
<svg class="a" style="left:1573px;top:619px;" width="8" height="12" viewBox="0 0 8 12"><path d="M1.5 1l5 5-5 5" fill="none" stroke="#4f6a80" stroke-width="1.5"/></svg>
<div class="t" style="top:620.1px;font-size:11.5px;color:#4d6272;font-weight:bold;left:1606px;transform:scaleX(0.980);transform-origin:0 0;">Estimate</div>
<div class="t" style="top:620.1px;font-size:11.5px;color:#4d6272;font-weight:bold;left:1672.6px;transform:scaleX(0.957);transform-origin:0 0;">Hire</div>
<div class="t" style="top:620.1px;font-size:11.5px;color:#4d6272;font-weight:bold;left:1728px;transform:scaleX(0.985);transform-origin:0 0;">Commission</div>
<div class="t" style="top:620.1px;font-size:11.5px;color:#4d6272;font-weight:bold;left:1830px;">Other Rev/Exp</div>
<div class="t" style="top:620.1px;font-size:11.5px;color:#4d6272;font-weight:bold;left:1943px;transform:scaleX(0.971);transform-origin:0 0;">Delays</div>
<div class="t" style="top:620.1px;font-size:11.5px;color:#4d6272;font-weight:bold;left:1998px;transform:scaleX(0.978);transform-origin:0 0;">Bunkers</div>
<div class="t" style="top:620.1px;font-size:11.5px;color:#4d6272;font-weight:bold;left:2077px;transform:scaleX(0.985);transform-origin:0 0;">Deviation</div>
<div class="t" style="top:620.1px;font-size:11.5px;color:#4d6272;font-weight:bold;left:2182px;transform:scaleX(0.990);transform-origin:0 0;">Reports</div>
<svg class="a" style="left:1700px;top:622px;" width="11" height="6.6" viewBox="0 0 11 6.6"><path d="M0 0h11 l-5.5 6.050000000000001 z" fill="#4d6272"/></svg>
<svg class="a" style="left:1802px;top:622px;" width="11" height="6.6" viewBox="0 0 11 6.6"><path d="M0 0h11 l-5.5 6.050000000000001 z" fill="#4d6272"/></svg>
<svg class="a" style="left:1914px;top:622px;" width="11" height="6.6" viewBox="0 0 11 6.6"><path d="M0 0h11 l-5.5 6.050000000000001 z" fill="#4d6272"/></svg>
<svg class="a" style="left:2048px;top:622px;" width="11" height="6.6" viewBox="0 0 11 6.6"><path d="M0 0h11 l-5.5 6.050000000000001 z" fill="#4d6272"/></svg>
<svg class="a" style="left:2134px;top:622px;" width="11" height="6.6" viewBox="0 0 11 6.6"><path d="M0 0h11 l-5.5 6.050000000000001 z" fill="#4d6272"/></svg>
<svg class="a" style="left:2230px;top:622px;" width="11" height="6.6" viewBox="0 0 11 6.6"><path d="M0 0h11 l-5.5 6.050000000000001 z" fill="#4d6272"/></svg>
<div class="a" style="left:2166px;top:619px;width:12px;height:12.5px;box-shadow:inset 0 0 0 1px #dde0e4;"></div>
<svg class="a" style="left:2167px;top:620px;" width="10" height="10" viewBox="0 0 10 10"><path d="M1 8l3-4 2 2 3-4" stroke="#d5d9de" fill="none"/></svg>
<svg class="a" style="left:2254px;top:615px;" width="20" height="18" viewBox="0 0 20 18"><path d="M1 10.5l5.5 5.5L19 1" fill="none" stroke="#35c635" stroke-width="2.6"/></svg>
<div class="a" style="left:1289px;top:645.4px;width:1168px;height:1.6px;background:#c3cad6;"></div>
<svg class="a" style="left:2461px;top:618px;" width="16" height="11" viewBox="0 0 16 11"><path d="M0.5 10.5L8 1l7.5 9.5z" fill="#9a9a9a"/></svg>
<div class="a" style="left:2462.3px;top:640px;width:14.2px;height:598px;background:#8d8d8d;border-radius:7px;"></div>
<svg class="a" style="left:2461px;top:1384px;" width="16" height="11" viewBox="0 0 16 11"><path d="M0.5 0.5h15L8 10z" fill="#9a9a9a"/></svg>
<div class="t" style="top:657.8px;font-size:11.5px;color:#4a4f57;right:1541px;">Vessel</div>
<div class="t" style="top:676.5px;font-size:11.5px;color:#4a4f57;right:1541px;">TC Code/Hire</div>
<div class="t" style="top:695.2px;font-size:11.5px;color:#4a4f57;right:1541px;">TCO Code</div>
<div class="t" style="top:714px;font-size:11.5px;color:#4a4f57;right:1455px;">Bunker Calc Method</div>
<div class="a" style="left:1403.9px;top:671.6px;width:96.8px;height:20.1px;box-shadow:inset 0 0 0 1.4px #c9cfdb;"></div>
<div class="a" style="left:1503.6px;top:672.3px;width:78.4px;height:18.7px;background:#eef0f3;"></div>
<div class="a" style="left:1502.9px;top:671.6px;width:79.8px;height:20.1px;box-shadow:inset 0 0 0 1.4px #c9cfdb;"></div>
<div class="a" style="left:1403.9px;top:690.3px;width:178.8px;height:20.2px;box-shadow:inset 0 0 0 1.4px #c9cfdb;"></div>
<div class="a" style="left:1490.9px;top:709.1px;width:91.8px;height:20.2px;box-shadow:inset 0 0 0 1.4px #c9cfdb;"></div>
<div class="t" style="top:676.5px;font-size:11.5px;color:#4d525a;right:1367px;">16,107.26</div>
<div class="t" style="top:714px;font-size:11.5px;color:#4d525a;left:1499px;">FIFO</div>
<div class="a" style="left:1403.6px;top:672px;width:50.4px;height:44px;background:#edecea;"></div>
<div class="a" style="left:1454px;top:672px;width:44px;height:44px;background:#e7e9ee;"></div>
<div class="a" style="left:1404.6px;top:653.6px;width:177.4px;height:18.7px;background:#fff;box-shadow:inset 0 0 0 1.6px #2f5d7c;border-radius:1.5px;"></div>
<div class="a" style="left:1410.5px;top:656.2px;width:84.5px;height:13.6px;background:#c9c9c9;"></div>
<div class="t" style="top:657.8px;font-size:11.5px;color:#3b3f45;font-weight:bold;left:1411.5px;transform:scaleX(0.978);transform-origin:0 0;">TEST VESSEL1</div>
<svg class="a" style="left:1565.5px;top:660.5px;" width="11" height="7" viewBox="0 0 11 7"><path d="M0 0h11l-5.5 6.5z" fill="#1d2b36"/></svg>
<div class="t" style="top:657.8px;font-size:11.5px;color:#4a4f57;right:1242px;">Voy No./Opr Type</div>
<div class="a" style="left:1702.9px;top:652.9px;width:204.8px;height:20.1px;box-shadow:inset 0 0 0 1.4px #c9cfdb;"></div>
<div class="t" style="top:676.5px;font-size:11.5px;color:#4a4f57;right:1242px;">Trade Area</div>
<div class="a" style="left:1702.9px;top:671.6px;width:204.8px;height:20.1px;box-shadow:inset 0 0 0 1.4px #c9cfdb;"></div>
<div class="t" style="top:695.2px;font-size:11.5px;color:#4a4f57;right:1242px;">Charterer</div>
<div class="a" style="left:1703.6px;top:691px;width:203.4px;height:18.8px;background:#eef0f3;"></div>
<div class="a" style="left:1702.9px;top:690.3px;width:204.8px;height:20.2px;box-shadow:inset 0 0 0 1.4px #c9cfdb;"></div>
<div class="t" style="top:714px;font-size:11.5px;color:#4a4f57;right:1242px;">Ops Coordinator</div>
<div class="a" style="left:1702.9px;top:709.1px;width:204.8px;height:20.2px;box-shadow:inset 0 0 0 1.4px #c9cfdb;"></div>
<div class="a" style="left:1765.4px;top:653.6px;width:1.2px;height:18.7px;background:#c9cfdb;"></div>
<div class="a" style="left:1841px;top:653.6px;width:1.2px;height:18.7px;background:#c9cfdb;"></div>
<div class="a" style="left:1706px;top:656px;width:43.6px;height:14px;background:#c5c9d0;"></div>
<div class="t" style="top:657.8px;font-size:11.5px;color:#4d525a;right:1105px;">40</div>
<div class="t" style="top:657.8px;font-size:11.5px;color:#4d525a;left:1849px;">TCTO</div>
<div class="a" style="left:1705px;top:693px;width:110px;height:22px;background:#fbfbfb;"></div>
<div class="a" style="left:2336px;top:650px;width:121px;height:82px;overflow:hidden;">
<div class="a" style="left:-0.1px;top:2.9px;width:144.8px;height:20.1px;box-shadow:inset 0 0 0 1.4px #c9cfdb;"></div>
<div class="a" style="left:-0.1px;top:21.6px;width:144.8px;height:20.1px;box-shadow:inset 0 0 0 1.4px #c9cfdb;"></div>
<div class="a" style="left:0.6px;top:41px;width:143.4px;height:18.8px;background:#eef0f3;"></div>
<div class="a" style="left:-0.1px;top:40.3px;width:144.8px;height:20.2px;box-shadow:inset 0 0 0 1.4px #c9cfdb;"></div>
<div class="a" style="left:0.6px;top:59.8px;width:143.4px;height:18.8px;background:#eef0f3;"></div>
<div class="a" style="left:-0.1px;top:59.1px;width:144.8px;height:20.2px;box-shadow:inset 0 0 0 1.4px #c9cfdb;"></div>
<div class="t" style="top:7.8px;font-size:11.5px;color:#4d525a;left:8px;">Scheduled</div>
<div class="t" style="top:26.5px;font-size:11.5px;color:#4d525a;left:69px;">03/30/26 19:30</div>
<div class="t" style="top:45.2px;font-size:11.5px;color:#4d525a;left:69px;">05/11/26 04:02</div>
</div>
<div class="t" style="top:657.8px;font-size:11.5px;color:#4a4f57;right:610px;">Voyage Status</div>
<div class="t" style="top:676.5px;font-size:11.5px;color:#4a4f57;right:610px;">Voyage Commencing</div>
<div class="t" style="top:695.2px;font-size:11.5px;color:#4a4f57;right:610px;">Voyage Completing</div>
<div class="t" style="top:714px;font-size:11.5px;color:#4a4f57;right:610px;">Last Update GMT</div>
<div class="t" style="top:752.1px;font-size:11.5px;color:#4a4f57;left:1324px;transform:scaleX(1.011);transform-origin:0 0;">Itinerary</div>
<div class="a" style="left:1397px;top:753px;width:13px;height:13px;background:#fff;box-shadow:inset 0 0 0 1.2px #7a8088;border-radius:2px;"></div>
<div class="t" style="top:755.1px;font-size:11.5px;color:#4a4f57;left:1414.6px;">Last TCI Voy</div>
<div class="a" style="left:1497px;top:753px;width:13px;height:13px;background:#2f6fc6;border-radius:2px;"></div>
<svg class="a" style="left:1497px;top:753px;" width="13" height="13" viewBox="0 0 13 13"><path d="M2.6 6.8l2.8 2.8 5-6" fill="none" stroke="#fff" stroke-width="1.8"/></svg>
<div class="t" style="top:755.1px;font-size:11.5px;color:#4a4f57;left:1514.6px;transform:scaleX(0.986);transform-origin:0 0;">Last TCO Voy</div>
<div class="a" style="left:2040px;top:744px;width:417px;height:23px;overflow:hidden;">
<div class="t" style="top:3.2px;font-size:11.5px;color:#5b8099;font-weight:bold;left:6px;transform:scaleX(0.990);transform-origin:0 0;">BL Info</div>
<div class="t" style="top:3.2px;font-size:11.5px;color:#5b8099;font-weight:bold;left:62px;transform:scaleX(0.981);transform-origin:0 0;">Cargo</div>
<div class="t" style="top:3.2px;font-size:11.5px;color:#5b8099;font-weight:bold;left:111.6px;transform:scaleX(0.989);transform-origin:0 0;">Draft/Restrictions</div>
<div class="t" style="top:3.2px;font-size:11.5px;color:#5b8099;font-weight:bold;left:224.6px;transform:scaleX(0.993);transform-origin:0 0;">Vessel Draft</div>
<div class="t" style="top:3.2px;font-size:11.5px;color:#5b8099;font-weight:bold;left:307px;transform:scaleX(0.978);transform-origin:0 0;">Bunkers</div>
<div class="t" style="top:3.2px;font-size:11.5px;color:#1f4e6e;font-weight:bold;left:369px;transform:scaleX(1.020);transform-origin:0 0;">Port/Date</div>
<div class="a" style="left:361.5px;top:18px;width:58.5px;height:3.6px;background:#1f4e6e;"></div>
</div>
<div class="a" style="left:1289px;top:646.5px;width:1168.3px;height:754.5px;overflow:hidden;">
<div class="a" style="left:14.6px;top:119.5px;width:1166.4px;height:281.8px;box-shadow:inset 0 0 0 1.2px #c9cfdb;"></div>
</div>
<div class="a" style="left:1304.2px;top:766.6px;width:1153.1px;height:280.6px;overflow:hidden;">
<div class="a" style="left:-0.2px;top:0.4px;width:1153px;height:16.5px;background:#e6e6ee;"></div>
<div class="a" style="left:-0.2px;top:16.5px;width:1153px;height:1.3px;background:#c9ccdb;"></div>
<div class="a" style="left:163.2px;top:0.4px;width:1.2px;height:16.5px;background:#c9ccdb;"></div>
<div class="a" style="left:187.2px;top:0.4px;width:1.2px;height:16.5px;background:#c9ccdb;"></div>
<div class="a" style="left:287.8px;top:0.4px;width:1.2px;height:16.5px;background:#c9ccdb;"></div>
<div class="a" style="left:362.8px;top:0.4px;width:1.2px;height:16.5px;background:#c9ccdb;"></div>
<div class="a" style="left:412.8px;top:0.4px;width:1.2px;height:16.5px;background:#c9ccdb;"></div>
<div class="a" style="left:487.8px;top:0.4px;width:1.2px;height:16.5px;background:#c9ccdb;"></div>
<div class="a" style="left:587.7px;top:0.4px;width:1.2px;height:16.5px;background:#c9ccdb;"></div>
<div class="a" style="left:687.7px;top:0.4px;width:1.2px;height:16.5px;background:#c9ccdb;"></div>
<div class="a" style="left:737.7px;top:0.4px;width:1.2px;height:16.5px;background:#c9ccdb;"></div>
<div class="a" style="left:788px;top:0.4px;width:1.2px;height:16.5px;background:#c9ccdb;"></div>
<div class="a" style="left:825.2px;top:0.4px;width:1.2px;height:16.5px;background:#c9ccdb;"></div>
<div class="a" style="left:875.2px;top:0.4px;width:1.2px;height:16.5px;background:#c9ccdb;"></div>
<div class="a" style="left:912.8px;top:0.4px;width:1.2px;height:16.5px;background:#c9ccdb;"></div>
<div class="a" style="left:950.2px;top:0.4px;width:1.2px;height:16.5px;background:#c9ccdb;"></div>
<div class="a" style="left:1050.2px;top:0.4px;width:1.2px;height:16.5px;background:#c9ccdb;"></div>
<div class="a" style="left:1087.7px;top:0.4px;width:1.2px;height:16.5px;background:#c9ccdb;"></div>
<div class="t" style="top:2.4px;font-size:11.5px;color:#6f7783;left:5.8px;">Port Name</div>
<div class="t" style="top:2.4px;font-size:11.5px;color:#6f7783;left:168.4px;">F</div>
<div class="t" style="top:2.4px;font-size:11.5px;color:#6f7783;left:193.3px;">Miles</div>
<div class="t" style="top:2.4px;font-size:11.5px;color:#6f7783;left:293.4px;">ECA Miles</div>
<div class="t" style="top:2.4px;font-size:11.5px;color:#6f7783;left:368.4px;">DToGo</div>
<div class="t" style="top:2.4px;font-size:11.5px;color:#6f7783;left:418.8px;">Speed</div>
<div class="t" style="top:2.4px;font-size:11.5px;color:#6f7783;left:493.4px;">Sea Mode</div>
<div class="t" style="top:2.4px;font-size:11.5px;color:#6f7783;left:593.4px;">Port Mode</div>
<div class="t" style="top:2.4px;font-size:11.5px;color:#6f7783;left:693.4px;">WF%</div>
<div class="t" style="top:2.4px;font-size:11.5px;color:#6f7783;left:743.4px;">SDays</div>
<div class="t" style="top:2.4px;font-size:11.5px;color:#6f7783;left:793.8px;">XSD</div>
<div class="t" style="top:2.4px;font-size:11.5px;color:#6f7783;left:831.3px;">TSday</div>
<div class="t" style="top:2.4px;font-size:11.5px;color:#6f7783;left:880.8px;">B/L</div>
<div class="t" style="top:2.4px;font-size:11.5px;color:#6f7783;left:918.8px;">Day</div>
<div class="t" style="top:2.4px;font-size:11.5px;color:#6f7783;left:955.8px;">Arrival</div>
<div class="t" style="top:2.4px;font-size:11.5px;color:#6f7783;left:1055.8px;">Day</div>
<div class="t" style="top:2.4px;font-size:11.5px;color:#6f7783;left:1093.4px;">Departure</div>
<div class="t" style="top:24.5px;font-size:11.5px;color:#33373d;left:5.8px;text-shadow:0.3px 0 0 #33373d;">HOUSTON</div>
<div class="t" style="top:24.5px;font-size:11.5px;color:#33373d;left:167.8px;text-shadow:0.3px 0 0 #33373d;">C</div>
<div class="t" style="top:24.5px;font-size:11.5px;color:#33373d;right:671.3px;text-shadow:0.3px 0 0 #33373d;">0.0</div>
<div class="t" style="top:24.5px;font-size:11.5px;color:#33373d;left:593.4px;text-shadow:0.3px 0 0 #33373d;">Default</div>
<div class="t" style="top:24.5px;font-size:11.5px;color:#33373d;right:420.7px;text-shadow:0.3px 0 0 #33373d;">0.00</div>
<div class="t" style="top:24.5px;font-size:11.5px;color:#33373d;left:1055.8px;text-shadow:0.3px 0 0 #33373d;">MON</div>
<div class="t" style="top:24.5px;font-size:11.5px;color:#8c8fd4;right:3.3px;">03/30/26</div>
<div class="a" style="left:-0.2px;top:38.9px;width:1153px;height:18.6px;background:#e8eef2;"></div>
<div class="t" style="top:43.3px;font-size:11.5px;color:#33373d;left:5.8px;text-shadow:0.3px 0 0 #33373d;">HOUSTON</div>
<div class="t" style="top:43.3px;font-size:11.5px;color:#33373d;left:167.8px;text-shadow:0.3px 0 0 #33373d;">Y</div>
<div class="t" style="top:43.3px;font-size:11.5px;color:#33373d;right:746.3px;text-shadow:0.3px 0 0 #33373d;">1,553</div>
<div class="t" style="top:43.3px;font-size:11.5px;color:#33373d;right:671.3px;text-shadow:0.3px 0 0 #33373d;">12.3</div>
<div class="t" style="top:43.3px;font-size:11.5px;color:#33373d;left:493.4px;text-shadow:0.3px 0 0 #33373d;">Default</div>
<div class="t" style="top:43.3px;font-size:11.5px;color:#33373d;left:593.4px;text-shadow:0.3px 0 0 #33373d;">Default</div>
<div class="t" style="top:43.3px;font-size:11.5px;color:#33373d;right:420.7px;text-shadow:0.3px 0 0 #33373d;">10.00</div>
<div class="t" style="top:43.3px;font-size:11.5px;color:#33373d;left:880.8px;text-shadow:0.3px 0 0 #33373d;">B</div>
<div class="t" style="top:43.3px;font-size:11.5px;color:#33373d;left:918.4px;text-shadow:0.3px 0 0 #33373d;">MON</div>
<div class="t" style="top:43.3px;font-size:11.5px;color:#8c8fd4;right:108.7px;">03/30/26 19:30</div>
<div class="t" style="top:43.3px;font-size:11.5px;color:#33373d;left:1055.8px;text-shadow:0.3px 0 0 #33373d;">MON</div>
<div class="t" style="top:43.3px;font-size:11.5px;color:#8c8fd4;right:3.3px;">03/30/26</div>
<div class="t" style="top:62px;font-size:11.5px;color:#8c9095;left:5.8px;">ECA - PANAMA CANAL</div>
<div class="t" style="top:62px;font-size:11.5px;color:#8c9095;left:167.8px;">P</div>
<div class="t" style="top:62px;font-size:11.5px;color:#8c9095;right:871.3px;">1,545</div>
<div class="t" style="top:62px;font-size:11.5px;color:#8c9095;right:796.3px;">364</div>
<div class="t" style="top:62px;font-size:11.5px;color:#8c9095;right:671.3px;">12.3</div>
<div class="t" style="top:62px;font-size:11.5px;color:#8c9095;left:493.4px;">Default</div>
<div class="t" style="top:62px;font-size:11.5px;color:#8c9095;left:593.4px;">Default</div>
<div class="t" style="top:62px;font-size:11.5px;color:#8c9095;right:420.7px;">10.00</div>
<div class="t" style="top:62px;font-size:11.5px;color:#8c9095;left:880.8px;">B</div>
<div class="t" style="top:62px;font-size:11.5px;color:#8c9095;right:108.7px;">04/05/26 14:14</div>
<div class="t" style="top:62px;font-size:11.5px;color:#8c9095;right:3.3px;">04/05/26</div>
<div class="a" style="left:-0.2px;top:76.4px;width:1153px;height:18.6px;background:#e8eef2;"></div>
<div class="t" style="top:80.8px;font-size:11.5px;color:#8c9095;left:5.8px;">PANAMA CANAL</div>
<div class="t" style="top:80.8px;font-size:11.5px;color:#8c9095;left:167.8px;">I</div>
<div class="t" style="top:80.8px;font-size:11.5px;color:#8c9095;right:871.3px;">8</div>
<div class="t" style="top:80.8px;font-size:11.5px;color:#8c9095;right:796.3px;">8</div>
<div class="t" style="top:80.8px;font-size:11.5px;color:#8c9095;right:746.3px;">8,409</div>
<div class="t" style="top:80.8px;font-size:11.5px;color:#8c9095;right:671.3px;">12.3</div>
<div class="t" style="top:80.8px;font-size:11.5px;color:#8c9095;left:493.4px;">Default</div>
<div class="t" style="top:80.8px;font-size:11.5px;color:#8c9095;left:593.4px;">Default</div>
<div class="t" style="top:80.8px;font-size:11.5px;color:#8c9095;right:420.7px;">10.00</div>
<div class="t" style="top:80.8px;font-size:11.5px;color:#8c9095;right:371.3px;">5.28</div>
<div class="t" style="top:80.8px;font-size:11.5px;color:#8c9095;right:333.3px;">0.5</div>
<div class="t" style="top:80.8px;font-size:11.5px;color:#8c9095;right:283.7px;">5.81</div>
<div class="t" style="top:80.8px;font-size:11.5px;color:#8c9095;left:880.8px;">B</div>
<div class="t" style="top:80.8px;font-size:11.5px;color:#8c9095;left:918.4px;">SUN</div>
<div class="t" style="top:80.8px;font-size:11.5px;color:#8c9095;right:108.7px;">04/05/26 14:57</div>
<div class="t" style="top:80.8px;font-size:11.5px;color:#8c9095;left:1055.8px;">THU</div>
<div class="t" style="top:80.8px;font-size:11.5px;color:#8c9095;right:3.3px;">04/09/26</div>
<div class="t" style="top:99.6px;font-size:11.5px;color:#8c9095;left:5.8px;">NA 200NM</div>
<div class="t" style="top:99.6px;font-size:11.5px;color:#8c9095;left:167.8px;">P</div>
<div class="t" style="top:99.6px;font-size:11.5px;color:#8c9095;right:871.3px;">2,912</div>
<div class="t" style="top:99.6px;font-size:11.5px;color:#8c9095;right:796.3px;">39</div>
<div class="t" style="top:99.6px;font-size:11.5px;color:#8c9095;right:671.3px;">12.3</div>
<div class="t" style="top:99.6px;font-size:11.5px;color:#8c9095;left:493.4px;">Default</div>
<div class="t" style="top:99.6px;font-size:11.5px;color:#8c9095;left:593.4px;">Default</div>
<div class="t" style="top:99.6px;font-size:11.5px;color:#8c9095;right:420.7px;">10.00</div>
<div class="t" style="top:99.6px;font-size:11.5px;color:#8c9095;left:880.8px;">B</div>
<div class="t" style="top:99.6px;font-size:11.5px;color:#8c9095;right:108.7px;">04/20/26 01:26</div>
<div class="t" style="top:99.6px;font-size:11.5px;color:#8c9095;right:3.3px;">04/20/26</div>
<div class="a" style="left:-0.2px;top:113.9px;width:1153px;height:18.6px;background:#e8eef2;"></div>
<div class="t" style="top:118.4px;font-size:11.5px;color:#33373d;left:5.8px;text-shadow:0.3px 0 0 #33373d;">CHINA</div>
<div class="t" style="top:118.4px;font-size:11.5px;color:#33373d;left:167.8px;text-shadow:0.3px 0 0 #33373d;">Z</div>
<div class="t" style="top:118.4px;font-size:11.5px;color:#8c9095;right:871.3px;">5,497</div>
<div class="t" style="top:118.4px;font-size:11.5px;color:#33373d;right:796.3px;text-shadow:0.3px 0 0 #33373d;">70</div>
<div class="t" style="top:118.4px;font-size:11.5px;color:#33373d;right:671.3px;text-shadow:0.3px 0 0 #33373d;">12.3</div>
<div class="t" style="top:118.4px;font-size:11.5px;color:#33373d;left:493.4px;text-shadow:0.3px 0 0 #33373d;">Default</div>
<div class="t" style="top:118.4px;font-size:11.5px;color:#33373d;left:593.4px;text-shadow:0.3px 0 0 #33373d;">Default</div>
<div class="t" style="top:118.4px;font-size:11.5px;color:#33373d;right:420.7px;text-shadow:0.3px 0 0 #33373d;">10.00</div>
<div class="t" style="top:118.4px;font-size:11.5px;color:#33373d;right:371.3px;text-shadow:0.3px 0 0 #33373d;">28.60</div>
<div class="t" style="top:118.4px;font-size:11.5px;color:#33373d;right:333.3px;text-shadow:0.3px 0 0 #33373d;">2.9</div>
<div class="t" style="top:118.4px;font-size:11.5px;color:#33373d;right:283.7px;text-shadow:0.3px 0 0 #33373d;">31.46</div>
<div class="t" style="top:118.4px;font-size:11.5px;color:#33373d;left:880.8px;text-shadow:0.3px 0 0 #33373d;">B</div>
<div class="t" style="top:118.4px;font-size:11.5px;color:#33373d;left:918.4px;text-shadow:0.3px 0 0 #33373d;">MON</div>
<div class="t" style="top:118.4px;font-size:11.5px;color:#8c8fd4;right:108.7px;">05/11/26 04:02</div>
<div class="t" style="top:118.4px;font-size:11.5px;color:#33373d;left:1055.8px;text-shadow:0.3px 0 0 #33373d;">MON</div>
<div class="t" style="top:118.4px;font-size:11.5px;color:#8c8fd4;right:3.3px;">05/11/26</div>
<div class="t" style="top:136.2px;font-size:12px;color:#5f7f93;left:850.8px;">Add New Row</div>
<div class="a" style="left:32.8px;top:240.7px;width:770px;height:2px;background:#7d7d7d;"></div>
<div class="a" style="left:-0.2px;top:243.1px;width:1153px;height:1.2px;background:#d5d9e2;"></div>
<div class="t" style="top:248px;font-size:11.5px;color:#777b80;font-weight:bold;right:871.3px;">Total: 9,962</div>
<div class="t" style="top:248px;font-size:11.5px;color:#111;font-weight:bold;right:796.3px;">481</div>
<div class="t" style="top:248px;font-size:11.5px;color:#111;font-weight:bold;right:671.3px;">Avg: 12.2</div>
<div class="a" style="left:-0.2px;top:260.4px;width:1153px;height:20px;background:#f8f8f8;"></div>
<svg class="a" style="left:6.3px;top:260.9px;" width="13" height="15" viewBox="0 0 13 15"><path d="M12 0.5v14L1 7.5z" fill="#8f8f8f"/></svg>
<div class="a" style="left:28.3px;top:261.4px;width:778px;height:13.6px;background:#8c8c8c;border-radius:7px;"></div>
</div>
<div class="a" style="left:1304px;top:1047px;width:1153px;height:1.2px;background:#c9cfdb;"></div>
<div class="a" style="left:1907px;top:1082.6px;width:550px;height:1.2px;background:#c9cfdb;"></div>
<div class="t" style="top:1050.5px;font-size:11.5px;color:#4a4f57;right:1480px;">Piracy Routing</div>
<div class="a" style="left:1466px;top:1045.8px;width:78px;height:18.2px;background:#fff;"></div>
<div class="a" style="left:1465.3px;top:1045.1px;width:79.4px;height:19.6px;box-shadow:inset 0 0 0 1.4px #c9cfdb;"></div>
<div class="t" style="top:1050.5px;font-size:11.5px;color:#4d525a;left:1474px;">Enabled</div>
<div class="t" style="top:1069px;font-size:11.5px;color:#4a4f57;right:1480px;">ECA Routing</div>
<div class="a" style="left:1466px;top:1064px;width:78px;height:18.6px;background:#fff;"></div>
<div class="a" style="left:1465.3px;top:1063.3px;width:79.4px;height:20px;box-shadow:inset 0 0 0 1.4px #c9cfdb;"></div>
<div class="t" style="top:1069px;font-size:11.5px;color:#4d525a;left:1474px;">Default</div>
<div class="t" style="top:1069px;font-size:11.5px;color:#4a4f57;left:1324px;transform:scaleX(0.989);transform-origin:0 0;">Cargoes</div>
<div class="t" style="top:1050.5px;font-size:11.5px;color:#4a4f57;right:1292px;">DWF %</div>
<div class="a" style="left:1654px;top:1045.8px;width:77.6px;height:18.2px;background:#fff;"></div>
<div class="a" style="left:1653.3px;top:1045.1px;width:79px;height:19.6px;box-shadow:inset 0 0 0 1.4px #c9cfdb;"></div>
<div class="t" style="top:1050.5px;font-size:11.5px;color:#4d525a;right:1217px;">10.00</div>
<div class="t" style="top:1069px;font-size:11.5px;color:#4a4f57;right:1291px;">Load Line Routing</div>
<div class="a" style="left:1654px;top:1064px;width:77.6px;height:18.6px;background:#fff;"></div>
<div class="a" style="left:1653.3px;top:1063.3px;width:79px;height:20px;box-shadow:inset 0 0 0 1.4px #c9cfdb;"></div>
<div class="t" style="top:1069px;font-size:11.5px;color:#4d525a;left:1661px;">Default</div>
<div class="t" style="top:1069px;font-size:11.5px;color:#4a4f57;right:1117px;">INL Routing</div>
<div class="a" style="left:1828.6px;top:1064px;width:78.4px;height:18.6px;background:#fff;"></div>
<div class="a" style="left:1827.9px;top:1063.3px;width:79.8px;height:20px;box-shadow:inset 0 0 0 1.4px #c9cfdb;"></div>
<div class="t" style="top:1069px;font-size:11.5px;color:#4d525a;left:1836.6px;">Default</div>
<div class="a" style="left:2072px;top:1052px;width:13px;height:13px;background:#fff;box-shadow:inset 0 0 0 1.2px #7a8088;border-radius:2px;"></div>
<div class="t" style="top:1053.6px;font-size:11.5px;color:#4a4f57;left:2089.6px;transform:scaleX(0.986);transform-origin:0 0;">No Pooling Distribution</div>
<div class="a" style="left:1289px;top:646.5px;width:1168.3px;height:754.5px;overflow:hidden;">
<div class="a" style="left:14.6px;top:436.5px;width:1166.4px;height:217.2px;box-shadow:inset 0 0 0 1.2px #c9cfdb;"></div>
</div>
<div class="a" style="left:1304.2px;top:1084px;width:974.8px;height:17.4px;background:#e6e6ee;"></div>
<div class="a" style="left:1304px;top:1100.9px;width:975px;height:1.3px;background:#c9ccdb;"></div>
<div class="a" style="left:1329px;top:1084px;width:1.2px;height:17.4px;background:#c9ccdb;"></div>
<div class="a" style="left:1392px;top:1084px;width:1.2px;height:17.4px;background:#c9ccdb;"></div>
<div class="a" style="left:1542px;top:1084px;width:1.2px;height:17.4px;background:#c9ccdb;"></div>
<div class="a" style="left:1654.4px;top:1084px;width:1.2px;height:17.4px;background:#c9ccdb;"></div>
<div class="a" style="left:1704.4px;top:1084px;width:1.2px;height:17.4px;background:#c9ccdb;"></div>
<div class="a" style="left:1754.4px;top:1084px;width:1.2px;height:17.4px;background:#c9ccdb;"></div>
<div class="a" style="left:1829.4px;top:1084px;width:1.2px;height:17.4px;background:#c9ccdb;"></div>
<div class="a" style="left:1854.4px;top:1084px;width:1.2px;height:17.4px;background:#c9ccdb;"></div>
<div class="a" style="left:1929.4px;top:1084px;width:1.2px;height:17.4px;background:#c9ccdb;"></div>
<div class="a" style="left:2004.4px;top:1084px;width:1.2px;height:17.4px;background:#c9ccdb;"></div>
<div class="a" style="left:2067px;top:1084px;width:1.2px;height:17.4px;background:#c9ccdb;"></div>
<div class="a" style="left:2167px;top:1084px;width:1.2px;height:17.4px;background:#c9ccdb;"></div>
<div class="a" style="left:2204.4px;top:1084px;width:1.2px;height:17.4px;background:#c9ccdb;"></div>
<div class="t" style="top:1087.6px;font-size:11.5px;color:#6f7783;left:1310px;">N</div>
<div class="t" style="top:1087.6px;font-size:11.5px;color:#6f7783;left:1335px;">ID</div>
<div class="t" style="top:1087.6px;font-size:11.5px;color:#6f7783;left:1397.6px;">Cargo</div>
<div class="t" style="top:1087.6px;font-size:11.5px;color:#6f7783;left:1547.6px;">C/P Qty</div>
<div class="t" style="top:1087.6px;font-size:11.5px;color:#6f7783;left:1660px;">Unit</div>
<div class="t" style="top:1087.6px;font-size:11.5px;color:#6f7783;left:1710px;">Opt %</div>
<div class="t" style="top:1087.6px;font-size:11.5px;color:#6f7783;left:1760px;">Opt Type</div>
<div class="t" style="top:1087.6px;font-size:11.5px;color:#6f7783;left:1835px;">T</div>
<div class="t" style="top:1087.6px;font-size:11.5px;color:#6f7783;left:1860px;">Frt Rate</div>
<div class="t" style="top:1087.6px;font-size:11.5px;color:#6f7783;left:1935px;">Lumpsum</div>
<div class="t" style="top:1087.6px;font-size:11.5px;color:#6f7783;left:2010px;">Comm%</div>
<div class="t" style="top:1087.6px;font-size:11.5px;color:#6f7783;left:2072.6px;">Charterer</div>
<div class="t" style="top:1087.6px;font-size:11.5px;color:#6f7783;left:2172.6px;">Curr</div>
<div class="t" style="top:1087.6px;font-size:11.5px;color:#6f7783;left:2210px;">Exch Rate</div>
<div class="a" style="left:1304px;top:1281.1px;width:975px;height:1.2px;background:#c9cfdb;"></div>
<div class="t" style="top:1286.1px;font-size:11.5px;color:#222;font-weight:bold;left:1609px;">Total: 0</div>
<div class="t" style="top:1344.1px;font-size:11.5px;color:#4a4f57;left:1311px;transform:scaleX(1.005);transform-origin:0 0;">Voyage Remarks</div>
<div class="t" style="top:1344.1px;font-size:11.5px;color:#4a4f57;left:1915px;transform:scaleX(0.988);transform-origin:0 0;">Notes to Operations</div>
<div class="a" style="left:1296px;top:1352px;width:1161.3px;height:49px;overflow:hidden;">
<div class="a" style="left:7.6px;top:6px;width:594.4px;height:62px;background:#fff;"></div>
<div class="a" style="left:6.9px;top:5.3px;width:595.8px;height:63.4px;box-shadow:inset 0 0 0 1.4px #c9cfdb;"></div>
<div class="a" style="left:611px;top:6px;width:563px;height:62px;background:#f1f2f5;"></div>
<div class="a" style="left:610.3px;top:5.3px;width:564.4px;height:63.4px;box-shadow:inset 0 0 0 1.4px #c9cfdb;"></div>
</div>
<div class="a" style="left:1289px;top:1401px;width:1192px;height:23px;background:#fbfbfb;"></div>
<svg class="a" style="left:1296px;top:1405.5px;" width="12" height="15" viewBox="0 0 12 15"><path d="M11 0.5v14L1 7.5z" fill="#8f8f8f"/></svg>
<div class="a" style="left:1317px;top:1406.2px;width:845px;height:13.8px;background:#8c8c8c;border-radius:7px;"></div>
<svg class="a" style="left:2438.5px;top:1405.5px;" width="12" height="15" viewBox="0 0 12 15"><path d="M1 0.5v14l10-7z" fill="#8f8f8f"/></svg>
<div class="a" style="left:2482px;top:580.5px;width:404px;height:843.5px;background:#fff;"></div>
<div class="a" style="left:2482px;top:1031.7px;width:404px;height:392.3px;background:#e8e8f0;"></div>
<div class="a" style="left:2481.3px;top:580.5px;width:1.4px;height:843.5px;background:#c9c9da;"></div>
<div class="t" style="top:588.9px;font-size:18px;color:#0d0f12;font-weight:bold;left:2493.6px;transform:scaleX(1.039);transform-origin:0 0;">P&amp;L</div>
<svg class="a" style="left:2849px;top:588px;" width="20" height="18" viewBox="0 0 20 18"><path d="M2 16L18 2M18 2h-6M18 2v6M2 16h6M2 16v-6" fill="none" stroke="#3d6a87" stroke-width="1.3"/></svg>
<div class="a" style="left:2482.7px;top:613px;width:403.3px;height:26px;background:#e8e8f0;"></div>
<div class="a" style="left:2482px;top:612.3px;width:404px;height:1.4px;background:#b9b9d2;"></div>
<div class="a" style="left:2482px;top:638.3px;width:404px;height:1.4px;background:#b9b9d2;"></div>
<div class="a" style="left:2782.3px;top:613px;width:1.4px;height:26px;background:#b9b9d2;"></div>
<div class="t" style="top:621px;font-size:12px;color:#585d66;left:2604.3px;">All Periods</div>
<div class="t" style="top:621px;font-size:12px;color:#585d66;left:2817.9px;">Actual</div>
<div class="t" style="top:646px;font-size:12.3px;color:#15181c;font-weight:bold;letter-spacing:0.2px;left:2488.6px;">REVENUES</div>
<div class="a" style="left:2482.7px;top:665.1px;width:401.3px;height:23.8px;background:#e8eff3;"></div>
<div class="t" style="top:671.1px;font-size:12.3px;color:#5d636b;left:2509px;">TCO Hire</div>
<div class="t" style="top:671.1px;font-size:12.3px;color:#4a4f57;right:62px;">489,273</div>
<div class="t" style="top:696px;font-size:12.3px;color:#15181c;font-weight:bold;left:2488.6px;">Total Revenues</div>
<div class="t" style="top:696px;font-size:12.3px;color:#4a4f57;right:62px;">489,273</div>
<div class="a" style="left:2482.7px;top:713.6px;width:401.3px;height:23.8px;background:#e8eff3;"></div>
<div class="t" style="top:719.6px;font-size:12.3px;color:#15181c;font-weight:bold;letter-spacing:0.2px;left:2488.6px;">EXPENSES</div>
<div class="t" style="top:744.6px;font-size:12.3px;color:#5d636b;left:2509px;">Hold Cleaning</div>
<div class="t" style="top:744.6px;font-size:12.3px;color:#4a4f57;right:62px;">2,250</div>
<div class="a" style="left:2482.7px;top:762.2px;width:401.3px;height:23.8px;background:#e8eff3;"></div>
<div class="t" style="top:768.2px;font-size:12.3px;color:#15181c;font-weight:bold;left:2488.6px;">Total Expenses</div>
<div class="t" style="top:768.2px;font-size:12.3px;color:#4a4f57;right:62px;">2,250</div>
<div class="t" style="top:792.6px;font-size:12.3px;color:#15181c;font-weight:bold;right:164px;">Voyage Result:</div>
<div class="t" style="top:792.6px;font-size:12.3px;color:#4a4f57;right:62px;">487,023</div>
<div class="a" style="left:2482.7px;top:811.4px;width:401.3px;height:23.8px;background:#e8eff3;"></div>
<div class="t" style="top:817.4px;font-size:12.3px;color:#15181c;font-weight:bold;right:164px;">Net Daily TCE:</div>
<div class="t" style="top:817.4px;font-size:12.3px;color:#4a4f57;right:62px;">11,945</div>
<div class="t" style="top:841.4px;font-size:12.3px;color:#15181c;font-weight:bold;letter-spacing:0.2px;left:2488.6px;">RUNNING COST</div>
<div class="a" style="left:2482.7px;top:860.4px;width:401.3px;height:23.8px;background:#e8eff3;"></div>
<div class="t" style="top:866.4px;font-size:12.3px;color:#5d636b;left:2509px;">Hire</div>
<div class="t" style="top:866.4px;font-size:12.3px;color:#4a4f57;right:62px;">656,738</div>
<div class="t" style="top:891.4px;font-size:12.3px;color:#5d636b;left:2509px;">Hire Add. Comm.</div>
<div class="t" style="top:891.4px;font-size:12.3px;color:#4a4f57;right:62px;">(24,628)</div>
<div class="a" style="left:2482.7px;top:908.7px;width:401.3px;height:23.8px;background:#e8eff3;"></div>
<div class="t" style="top:914.7px;font-size:12.3px;color:#5d636b;left:2509px;">CVE</div>
<div class="t" style="top:914.7px;font-size:12.3px;color:#4a4f57;right:62px;">2,039</div>
<div class="t" style="top:939.6px;font-size:12.3px;color:#15181c;font-weight:bold;left:2488.6px;">Total Running Cost</div>
<div class="t" style="top:939.6px;font-size:12.3px;color:#4a4f57;right:62px;">634,149</div>
<div class="a" style="left:2482.7px;top:958.4px;width:401.3px;height:23.8px;background:#e8eff3;"></div>
<div class="t" style="top:964.4px;font-size:12.3px;color:#15181c;font-weight:bold;letter-spacing:0.2px;left:2488.6px;">LEASE COST</div>
<div class="t" style="top:988.1px;font-size:12.3px;color:#15181c;font-weight:bold;left:2488.6px;">Total Lease Cost</div>
<div class="a" style="left:2482.7px;top:1007.1px;width:401.3px;height:23.8px;background:#e8eff3;"></div>
<div class="t" style="top:1013.1px;font-size:12.3px;color:#15181c;font-weight:bold;left:2488.6px;">Financial Profit (Loss)</div>
<div class="t" style="top:1013.1px;font-size:12.3px;color:#4a4f57;right:62px;">(147,125)</div>
<div class="a" style="left:2482px;top:1031px;width:404px;height:1.4px;background:#b9b9d2;"></div>
<div class="a" style="left:2482px;top:1057.3px;width:404px;height:1.4px;background:#b9b9d2;"></div>
<div class="a" style="left:2482px;top:1083.6px;width:404px;height:1.4px;background:#b9b9d2;"></div>
<div class="a" style="left:2482px;top:1109.3px;width:404px;height:1.4px;background:#b9b9d2;"></div>
<div class="a" style="left:2482px;top:1134.9px;width:404px;height:1.4px;background:#b9b9d2;"></div>
<div class="t" style="top:1038.7px;font-size:12.3px;color:#15181c;font-weight:bold;left:2488.6px;">Profit (Loss)</div>
<div class="t" style="top:1038.7px;font-size:12.3px;color:#4a4f57;right:62px;">(147,125)</div>
<div class="t" style="top:1064.7px;font-size:12.3px;color:#15181c;font-weight:bold;left:2488.6px;">Net Voyage Days</div>
<div class="t" style="top:1064.7px;font-size:12.3px;color:#4a4f57;right:62px;">40.77</div>
<div class="t" style="top:1091.7px;font-size:12.3px;color:#15181c;font-weight:bold;left:2488.6px;">Daily Profit (Loss)</div>
<div class="t" style="top:1091.7px;font-size:12.3px;color:#4a4f57;right:62px;">(3,608)</div>
<div class="t" style="top:1118.1px;font-size:12.3px;color:#4a4f57;left:2488.6px;">Total/Off hire days</div>
<div class="t" style="top:1118.1px;font-size:12.3px;color:#4a4f57;right:114px;">40.77</div>
<div class="t" style="top:1143.2px;font-size:12.3px;color:#4a4f57;left:2488.6px;">Port/sea days</div>
<div class="t" style="top:1143.2px;font-size:12.3px;color:#4a4f57;right:113.5px;">3.50</div>
<div class="t" style="top:1143.2px;font-size:12.3px;color:#4a4f57;right:62px;">37.27</div>
<div class="t" style="top:1167.6px;font-size:12.3px;color:#15181c;font-weight:bold;letter-spacing:2px;left:2488.6px;">P&amp;L REMARKS</div>
<div class="a" style="left:2489px;top:1181.6px;width:389.6px;height:143.4px;background:#fff;box-shadow:inset 0 0 0 1.3px #c5c9d8;"></div>
<div class="a" style="left:2886px;top:580.5px;width:40.5px;height:843.5px;background:#2f6280;"></div>
<div class="a" style="left:2886px;top:623.6px;width:40.5px;height:41.7px;background:#1b4868;"></div>
<svg class="a" style="left:2896.3px;top:590.8px;" width="20.5" height="20.5" viewBox="0 0 22 22"><path d="M10 5l-5 6 5 6M17 5l-5 6 5 6" fill="none" stroke="#fff" stroke-width="1.6"/></svg>
<svg class="a" style="left:2896.3px;top:633.8px;" width="20.5" height="20.5" viewBox="0 0 22 22"><path d="M2 19h18M4 18v-5M8 18v-7M12 18v-4M16 18v-8" stroke="#fff" stroke-width="1.8"/><path d="M2 10l5-5 4 3 7-6M18 2h-4M18 2v4" fill="none" stroke="#fff" stroke-width="1.5"/></svg>
<svg class="a" style="left:2896.3px;top:675.8px;" width="20.5" height="20.5" viewBox="0 0 22 22"><path d="M19 11a8 8 0 1 1-3-6.2" fill="none" stroke="#fff" stroke-width="2"/><path d="M14 1l5 3-4 4z" fill="#fff"/><path d="M5 9c3 0 5 2 6 5 1-3 3-5 6-5-1 4-3 6-6 6s-5-2-6-6z" fill="none" stroke="#fff" stroke-width="1.4"/></svg>
<svg class="a" style="left:2896.3px;top:717.8px;" width="20.5" height="20.5" viewBox="0 0 22 22"><rect x="1" y="3" width="20" height="15" rx="1.5" fill="none" stroke="#fff" stroke-width="1.8"/><rect x="1" y="7" width="20" height="5" fill="#fff"/><path d="M4 15h9" stroke="#fff" stroke-width="1.4"/></svg>
<svg class="a" style="left:2896.3px;top:758.4px;" width="20.5" height="20.5" viewBox="0 0 22 22"><rect x="1.5" y="2" width="19" height="18" rx="3" fill="none" stroke="#fff" stroke-width="1.8"/><path d="M5 7l1.5 1.5L9 6M5 12l1.5 1.5L9 11M5 17l1.5 1.2L9 16M11.5 7.5h6M11.5 12.5h6M11.5 17h6" fill="none" stroke="#fff" stroke-width="1.3"/></svg>
<svg class="a" style="left:2896.3px;top:799.8px;" width="20.5" height="20.5" viewBox="0 0 22 22"><path d="M18 12a7.5 7.5 0 1 1-5-7" fill="none" stroke="#fff" stroke-width="2.2"/><path d="M8 15l9-11M17 4l-5 .5M17 4l-.5 5" fill="none" stroke="#fff" stroke-width="2"/></svg>
<svg class="a" style="left:2896.3px;top:839.8px;" width="20.5" height="20.5" viewBox="0 0 22 22"><path d="M3.5 2h4l2 2v5.5h-6zM12.5 2h4l2 2v5.5h-6zM3.5 12.5h6V20h-4l-2-2zM12.5 12.5h6V18l-2 2h-4z" fill="none" stroke="#fff" stroke-width="1.7"/></svg>
<svg class="a" style="left:2896.3px;top:882.8px;" width="20.5" height="20.5" viewBox="0 0 22 22"><path d="M4 1.5h9l5 5v14H4zM13 1.5v5h5M7 10h8M7 13.5h8M7 17h8" fill="none" stroke="#fff" stroke-width="1.6"/></svg>
<svg class="a" style="left:2896.3px;top:924.8px;" width="20.5" height="20.5" viewBox="0 0 22 22"><rect x="3.5" y="1" width="15" height="20" fill="#fff"/><circle cx="11" cy="9" r="2.2" fill="#2f6280"/><path d="M6.5 15.5c1-3 8-3 9 0z" fill="#2f6280"/><rect x="3.5" y="1" width="15" height="2.5" fill="#cfdbe3"/></svg>
<svg class="a" style="left:2896.3px;top:965.8px;" width="20.5" height="20.5" viewBox="0 0 22 22"><path d="M16 4H5a1.5 1.5 0 0 0-1.5 1.5v13A1.5 1.5 0 0 0 5 20h11a1.5 1.5 0 0 0 1.5-1.5V11" fill="none" stroke="#fff" stroke-width="1.8"/><path d="M1.5 7.5h4M1.5 11.5h4M1.5 15.5h4" stroke="#fff" stroke-width="1.4"/><path d="M9 15l1-4 9-9 2.5 2.5-9 9z" fill="#fff"/></svg>
<div class="a" style="left:708px;top:372px;width:414px;height:36px;box-sizing:border-box;border:7.2px solid #e60505;"></div>
<div class="a" style="left:398.6px;top:620.5px;width:212.4px;height:32.1px;box-sizing:border-box;border:7.6px solid #e60505;"></div>
<div class="a" style="left:2479.6px;top:1046.8px;width:418.8px;height:42px;box-sizing:border-box;border:7.4px solid #e60505;"></div>
</div></body></html>
